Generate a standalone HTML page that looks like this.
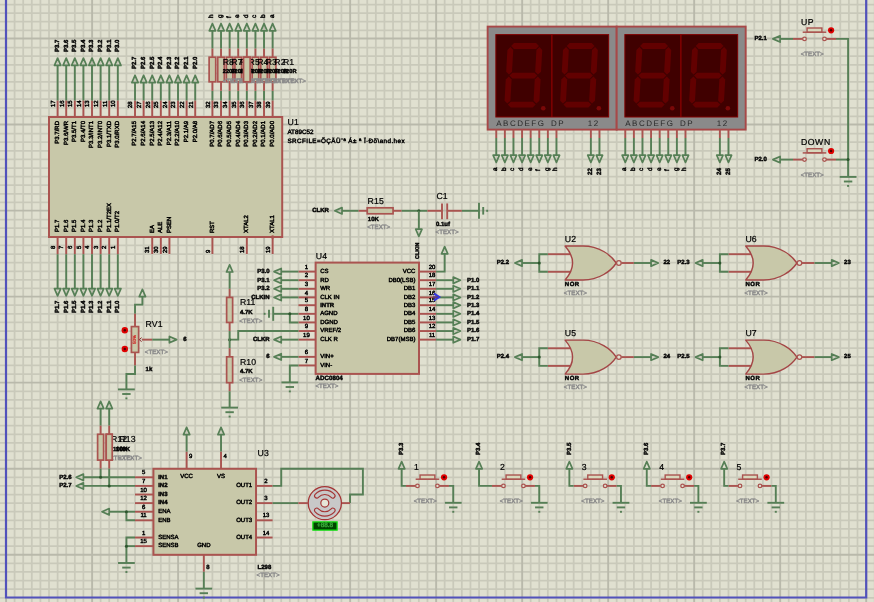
<!DOCTYPE html>
<html lang="en"><head><meta charset="utf-8"><title>Schematic</title>
<style>
html,body{margin:0;padding:0}
body{width:874px;height:602px;overflow:hidden;background:#e0e0d0;position:relative;font-family:"Liberation Sans",sans-serif;}
svg{position:absolute;left:0;top:0;display:block}
#t{position:absolute;left:0;top:0;width:874px;height:602px;will-change:transform;opacity:0.999}
#t span{position:absolute;white-space:nowrap;line-height:1em;transform-origin:0 0;color:#000;text-rendering:geometricPrecision;-webkit-text-stroke:0.45px currentColor;-webkit-font-smoothing:antialiased}
</style></head><body>
<svg width="874" height="602" viewBox="0 0 874 602">
<path d="M-2.6 0V602M14.6 0V602M23.2 0V602M31.8 0V602M40.4 0V602M49.01 0V602M57.61 0V602M66.21 0V602M74.81 0V602M83.41 0V602M100.61 0V602M109.21 0V602M117.81 0V602M126.41 0V602M135.02 0V602M143.62 0V602M152.22 0V602M160.82 0V602M169.42 0V602M186.62 0V602M195.22 0V602M203.82 0V602M212.42 0V602M221.03 0V602M229.63 0V602M238.23 0V602M246.83 0V602M255.43 0V602M272.63 0V602M281.23 0V602M289.83 0V602M298.43 0V602M307.04 0V602M315.64 0V602M324.24 0V602M332.84 0V602M341.44 0V602M358.64 0V602M367.24 0V602M375.84 0V602M384.44 0V602M393.05 0V602M401.65 0V602M410.25 0V602M418.85 0V602M427.45 0V602M444.65 0V602M453.25 0V602M461.85 0V602M470.45 0V602M479.06 0V602M487.66 0V602M496.26 0V602M504.86 0V602M513.46 0V602M530.66 0V602M539.26 0V602M547.86 0V602M556.46 0V602M565.07 0V602M573.67 0V602M582.27 0V602M590.87 0V602M599.47 0V602M616.67 0V602M625.27 0V602M633.87 0V602M642.47 0V602M651.08 0V602M659.68 0V602M668.28 0V602M676.88 0V602M685.48 0V602M702.68 0V602M711.28 0V602M719.88 0V602M728.48 0V602M737.09 0V602M745.69 0V602M754.29 0V602M762.89 0V602M771.49 0V602M788.69 0V602M797.29 0V602M805.89 0V602M814.49 0V602M823.1 0V602M831.7 0V602M840.3 0V602M848.9 0V602M857.5 0V602M874.7 0V602M0 -4.07H874M0 4.53H874M0 13.14H874M0 21.74H874M0 30.35H874M0 47.55H874M0 56.16H874M0 64.76H874M0 73.37H874M0 81.97H874M0 90.57H874M0 99.18H874M0 107.78H874M0 116.39H874M0 133.59H874M0 142.2H874M0 150.8H874M0 159.41H874M0 168.01H874M0 176.61H874M0 185.22H874M0 193.82H874M0 202.43H874M0 219.63H874M0 228.24H874M0 236.84H874M0 245.45H874M0 254.05H874M0 262.65H874M0 271.26H874M0 279.86H874M0 288.47H874M0 305.22H874M0 313.83H874M0 322.43H874M0 331.04H874M0 339.64H874M0 348.24H874M0 356.85H874M0 365.45H874M0 374.06H874M0 391.26H874M0 399.87H874M0 408.47H874M0 417.08H874M0 425.68H874M0 434.28H874M0 442.89H874M0 451.49H874M0 460.1H874M0 477.3H874M0 485.91H874M0 494.51H874M0 503.12H874M0 511.72H874M0 520.32H874M0 528.93H874M0 537.53H874M0 546.14H874M0 563.34H874M0 571.95H874M0 580.55H874M0 589.16H874M0 597.76H874M0 606.36H874" stroke="#c9c9ba" stroke-width="1.75" fill="none"/>
<path d="M6.1 0V602M92.11 0V602M178.12 0V602M264.13 0V602M350.14 0V602M436.15 0V602M522.16 0V602M608.17 0V602M694.18 0V602M780.19 0V602M866.2 0V602M0 38.5H874M0 124.54H874M0 210.58H874M0 296.62H874M0 382.66H874M0 468.7H874M0 554.74H874" stroke="#b9b9ab" stroke-width="1.9" fill="none"/>
<path d="M6 0V597.5H866.2V0" stroke="#5252bb" stroke-width="2.2" fill="none"/>
<rect x="49" y="117" width="233.2" height="120" fill="#c8c8a9" stroke="#aa5450" stroke-width="2.0"/>
<line x1="57.61" y1="100.4" x2="57.61" y2="117" stroke="#aa5450" stroke-width="1.9" stroke-linecap="butt"/>
<path d="M57.61 100.4 L57.61 65.4" stroke="#567f56" stroke-width="1.9" fill="none" stroke-linejoin="miter"/>
<path d="M60.76 65.4 L57.61 58.2 L54.46 65.4 Z" stroke="#567f56" stroke-width="1.7" fill="none" stroke-linejoin="round"/>
<line x1="66.21" y1="100.4" x2="66.21" y2="117" stroke="#aa5450" stroke-width="1.9" stroke-linecap="butt"/>
<path d="M66.21 100.4 L66.21 65.4" stroke="#567f56" stroke-width="1.9" fill="none" stroke-linejoin="miter"/>
<path d="M69.36 65.4 L66.21 58.2 L63.06 65.4 Z" stroke="#567f56" stroke-width="1.7" fill="none" stroke-linejoin="round"/>
<line x1="74.81" y1="100.4" x2="74.81" y2="117" stroke="#aa5450" stroke-width="1.9" stroke-linecap="butt"/>
<path d="M74.81 100.4 L74.81 65.4" stroke="#567f56" stroke-width="1.9" fill="none" stroke-linejoin="miter"/>
<path d="M77.96 65.4 L74.81 58.2 L71.66 65.4 Z" stroke="#567f56" stroke-width="1.7" fill="none" stroke-linejoin="round"/>
<line x1="83.41" y1="100.4" x2="83.41" y2="117" stroke="#aa5450" stroke-width="1.9" stroke-linecap="butt"/>
<path d="M83.41 100.4 L83.41 65.4" stroke="#567f56" stroke-width="1.9" fill="none" stroke-linejoin="miter"/>
<path d="M86.56 65.4 L83.41 58.2 L80.26 65.4 Z" stroke="#567f56" stroke-width="1.7" fill="none" stroke-linejoin="round"/>
<line x1="92.01" y1="100.4" x2="92.01" y2="117" stroke="#aa5450" stroke-width="1.9" stroke-linecap="butt"/>
<path d="M92.01 100.4 L92.01 65.4" stroke="#567f56" stroke-width="1.9" fill="none" stroke-linejoin="miter"/>
<path d="M95.16 65.4 L92.01 58.2 L88.86 65.4 Z" stroke="#567f56" stroke-width="1.7" fill="none" stroke-linejoin="round"/>
<line x1="100.61" y1="100.4" x2="100.61" y2="117" stroke="#aa5450" stroke-width="1.9" stroke-linecap="butt"/>
<path d="M100.61 100.4 L100.61 65.4" stroke="#567f56" stroke-width="1.9" fill="none" stroke-linejoin="miter"/>
<path d="M103.76 65.4 L100.61 58.2 L97.46 65.4 Z" stroke="#567f56" stroke-width="1.7" fill="none" stroke-linejoin="round"/>
<line x1="109.21" y1="100.4" x2="109.21" y2="117" stroke="#aa5450" stroke-width="1.9" stroke-linecap="butt"/>
<path d="M109.21 100.4 L109.21 65.4" stroke="#567f56" stroke-width="1.9" fill="none" stroke-linejoin="miter"/>
<path d="M112.36 65.4 L109.21 58.2 L106.06 65.4 Z" stroke="#567f56" stroke-width="1.7" fill="none" stroke-linejoin="round"/>
<line x1="117.81" y1="100.4" x2="117.81" y2="117" stroke="#aa5450" stroke-width="1.9" stroke-linecap="butt"/>
<path d="M117.81 100.4 L117.81 65.4" stroke="#567f56" stroke-width="1.9" fill="none" stroke-linejoin="miter"/>
<path d="M120.96 65.4 L117.81 58.2 L114.66 65.4 Z" stroke="#567f56" stroke-width="1.7" fill="none" stroke-linejoin="round"/>
<line x1="135.02" y1="100.4" x2="135.02" y2="117" stroke="#aa5450" stroke-width="1.9" stroke-linecap="butt"/>
<path d="M135.02 100.4 L135.02 82.6" stroke="#567f56" stroke-width="1.9" fill="none" stroke-linejoin="miter"/>
<path d="M138.17 82.6 L135.02 75.4 L131.87 82.6 Z" stroke="#567f56" stroke-width="1.7" fill="none" stroke-linejoin="round"/>
<line x1="143.62" y1="100.4" x2="143.62" y2="117" stroke="#aa5450" stroke-width="1.9" stroke-linecap="butt"/>
<path d="M143.62 100.4 L143.62 82.6" stroke="#567f56" stroke-width="1.9" fill="none" stroke-linejoin="miter"/>
<path d="M146.77 82.6 L143.62 75.4 L140.47 82.6 Z" stroke="#567f56" stroke-width="1.7" fill="none" stroke-linejoin="round"/>
<line x1="152.22" y1="100.4" x2="152.22" y2="117" stroke="#aa5450" stroke-width="1.9" stroke-linecap="butt"/>
<path d="M152.22 100.4 L152.22 82.6" stroke="#567f56" stroke-width="1.9" fill="none" stroke-linejoin="miter"/>
<path d="M155.37 82.6 L152.22 75.4 L149.07 82.6 Z" stroke="#567f56" stroke-width="1.7" fill="none" stroke-linejoin="round"/>
<line x1="160.82" y1="100.4" x2="160.82" y2="117" stroke="#aa5450" stroke-width="1.9" stroke-linecap="butt"/>
<path d="M160.82 100.4 L160.82 82.6" stroke="#567f56" stroke-width="1.9" fill="none" stroke-linejoin="miter"/>
<path d="M163.97 82.6 L160.82 75.4 L157.67 82.6 Z" stroke="#567f56" stroke-width="1.7" fill="none" stroke-linejoin="round"/>
<line x1="169.42" y1="100.4" x2="169.42" y2="117" stroke="#aa5450" stroke-width="1.9" stroke-linecap="butt"/>
<path d="M169.42 100.4 L169.42 82.6" stroke="#567f56" stroke-width="1.9" fill="none" stroke-linejoin="miter"/>
<path d="M172.57 82.6 L169.42 75.4 L166.27 82.6 Z" stroke="#567f56" stroke-width="1.7" fill="none" stroke-linejoin="round"/>
<line x1="178.02" y1="100.4" x2="178.02" y2="117" stroke="#aa5450" stroke-width="1.9" stroke-linecap="butt"/>
<path d="M178.02 100.4 L178.02 82.6" stroke="#567f56" stroke-width="1.9" fill="none" stroke-linejoin="miter"/>
<path d="M181.17 82.6 L178.02 75.4 L174.87 82.6 Z" stroke="#567f56" stroke-width="1.7" fill="none" stroke-linejoin="round"/>
<line x1="186.62" y1="100.4" x2="186.62" y2="117" stroke="#aa5450" stroke-width="1.9" stroke-linecap="butt"/>
<path d="M186.62 100.4 L186.62 82.6" stroke="#567f56" stroke-width="1.9" fill="none" stroke-linejoin="miter"/>
<path d="M189.77 82.6 L186.62 75.4 L183.47 82.6 Z" stroke="#567f56" stroke-width="1.7" fill="none" stroke-linejoin="round"/>
<line x1="195.22" y1="100.4" x2="195.22" y2="117" stroke="#aa5450" stroke-width="1.9" stroke-linecap="butt"/>
<path d="M195.22 100.4 L195.22 82.6" stroke="#567f56" stroke-width="1.9" fill="none" stroke-linejoin="miter"/>
<path d="M198.37 82.6 L195.22 75.4 L192.07 82.6 Z" stroke="#567f56" stroke-width="1.7" fill="none" stroke-linejoin="round"/>
<line x1="212.42" y1="100.4" x2="212.42" y2="117" stroke="#aa5450" stroke-width="1.9" stroke-linecap="butt"/>
<path d="M212.42 100.4 L212.42 90.8" stroke="#567f56" stroke-width="1.9" fill="none" stroke-linejoin="miter"/>
<line x1="212.42" y1="90.8" x2="212.42" y2="81.8" stroke="#aa5450" stroke-width="1.9" stroke-linecap="butt"/>
<line x1="212.42" y1="57.2" x2="212.42" y2="48.4" stroke="#aa5450" stroke-width="1.9" stroke-linecap="butt"/>
<path d="M212.42 48.4 L212.42 30.8" stroke="#567f56" stroke-width="1.9" fill="none" stroke-linejoin="miter"/>
<path d="M215.57 30.8 L212.42 23.6 L209.27 30.8 Z" stroke="#567f56" stroke-width="1.7" fill="none" stroke-linejoin="round"/>
<line x1="221.03" y1="100.4" x2="221.03" y2="117" stroke="#aa5450" stroke-width="1.9" stroke-linecap="butt"/>
<path d="M221.03 100.4 L221.03 90.8" stroke="#567f56" stroke-width="1.9" fill="none" stroke-linejoin="miter"/>
<line x1="221.03" y1="90.8" x2="221.03" y2="81.8" stroke="#aa5450" stroke-width="1.9" stroke-linecap="butt"/>
<line x1="221.03" y1="57.2" x2="221.03" y2="48.4" stroke="#aa5450" stroke-width="1.9" stroke-linecap="butt"/>
<path d="M221.03 48.4 L221.03 30.8" stroke="#567f56" stroke-width="1.9" fill="none" stroke-linejoin="miter"/>
<path d="M224.18 30.8 L221.03 23.6 L217.88 30.8 Z" stroke="#567f56" stroke-width="1.7" fill="none" stroke-linejoin="round"/>
<line x1="229.63" y1="100.4" x2="229.63" y2="117" stroke="#aa5450" stroke-width="1.9" stroke-linecap="butt"/>
<path d="M229.63 100.4 L229.63 90.8" stroke="#567f56" stroke-width="1.9" fill="none" stroke-linejoin="miter"/>
<line x1="229.63" y1="90.8" x2="229.63" y2="81.8" stroke="#aa5450" stroke-width="1.9" stroke-linecap="butt"/>
<line x1="229.63" y1="57.2" x2="229.63" y2="48.4" stroke="#aa5450" stroke-width="1.9" stroke-linecap="butt"/>
<path d="M229.63 48.4 L229.63 30.8" stroke="#567f56" stroke-width="1.9" fill="none" stroke-linejoin="miter"/>
<path d="M232.78 30.8 L229.63 23.6 L226.48 30.8 Z" stroke="#567f56" stroke-width="1.7" fill="none" stroke-linejoin="round"/>
<line x1="238.23" y1="100.4" x2="238.23" y2="117" stroke="#aa5450" stroke-width="1.9" stroke-linecap="butt"/>
<path d="M238.23 100.4 L238.23 90.8" stroke="#567f56" stroke-width="1.9" fill="none" stroke-linejoin="miter"/>
<line x1="238.23" y1="90.8" x2="238.23" y2="81.8" stroke="#aa5450" stroke-width="1.9" stroke-linecap="butt"/>
<line x1="238.23" y1="57.2" x2="238.23" y2="48.4" stroke="#aa5450" stroke-width="1.9" stroke-linecap="butt"/>
<path d="M238.23 48.4 L238.23 30.8" stroke="#567f56" stroke-width="1.9" fill="none" stroke-linejoin="miter"/>
<path d="M241.38 30.8 L238.23 23.6 L235.08 30.8 Z" stroke="#567f56" stroke-width="1.7" fill="none" stroke-linejoin="round"/>
<line x1="246.83" y1="100.4" x2="246.83" y2="117" stroke="#aa5450" stroke-width="1.9" stroke-linecap="butt"/>
<path d="M246.83 100.4 L246.83 90.8" stroke="#567f56" stroke-width="1.9" fill="none" stroke-linejoin="miter"/>
<line x1="246.83" y1="90.8" x2="246.83" y2="81.8" stroke="#aa5450" stroke-width="1.9" stroke-linecap="butt"/>
<line x1="246.83" y1="57.2" x2="246.83" y2="48.4" stroke="#aa5450" stroke-width="1.9" stroke-linecap="butt"/>
<path d="M246.83 48.4 L246.83 30.8" stroke="#567f56" stroke-width="1.9" fill="none" stroke-linejoin="miter"/>
<path d="M249.98 30.8 L246.83 23.6 L243.68 30.8 Z" stroke="#567f56" stroke-width="1.7" fill="none" stroke-linejoin="round"/>
<line x1="255.43" y1="100.4" x2="255.43" y2="117" stroke="#aa5450" stroke-width="1.9" stroke-linecap="butt"/>
<path d="M255.43 100.4 L255.43 90.8" stroke="#567f56" stroke-width="1.9" fill="none" stroke-linejoin="miter"/>
<line x1="255.43" y1="90.8" x2="255.43" y2="81.8" stroke="#aa5450" stroke-width="1.9" stroke-linecap="butt"/>
<line x1="255.43" y1="57.2" x2="255.43" y2="48.4" stroke="#aa5450" stroke-width="1.9" stroke-linecap="butt"/>
<path d="M255.43 48.4 L255.43 30.8" stroke="#567f56" stroke-width="1.9" fill="none" stroke-linejoin="miter"/>
<path d="M258.58 30.8 L255.43 23.6 L252.28 30.8 Z" stroke="#567f56" stroke-width="1.7" fill="none" stroke-linejoin="round"/>
<line x1="264.03" y1="100.4" x2="264.03" y2="117" stroke="#aa5450" stroke-width="1.9" stroke-linecap="butt"/>
<path d="M264.03 100.4 L264.03 90.8" stroke="#567f56" stroke-width="1.9" fill="none" stroke-linejoin="miter"/>
<line x1="264.03" y1="90.8" x2="264.03" y2="81.8" stroke="#aa5450" stroke-width="1.9" stroke-linecap="butt"/>
<line x1="264.03" y1="57.2" x2="264.03" y2="48.4" stroke="#aa5450" stroke-width="1.9" stroke-linecap="butt"/>
<path d="M264.03 48.4 L264.03 30.8" stroke="#567f56" stroke-width="1.9" fill="none" stroke-linejoin="miter"/>
<path d="M267.18 30.8 L264.03 23.6 L260.88 30.8 Z" stroke="#567f56" stroke-width="1.7" fill="none" stroke-linejoin="round"/>
<line x1="272.63" y1="100.4" x2="272.63" y2="117" stroke="#aa5450" stroke-width="1.9" stroke-linecap="butt"/>
<path d="M272.63 100.4 L272.63 90.8" stroke="#567f56" stroke-width="1.9" fill="none" stroke-linejoin="miter"/>
<line x1="272.63" y1="90.8" x2="272.63" y2="81.8" stroke="#aa5450" stroke-width="1.9" stroke-linecap="butt"/>
<line x1="272.63" y1="57.2" x2="272.63" y2="48.4" stroke="#aa5450" stroke-width="1.9" stroke-linecap="butt"/>
<path d="M272.63 48.4 L272.63 30.8" stroke="#567f56" stroke-width="1.9" fill="none" stroke-linejoin="miter"/>
<path d="M275.78 30.8 L272.63 23.6 L269.48 30.8 Z" stroke="#567f56" stroke-width="1.7" fill="none" stroke-linejoin="round"/>
<rect x="209.12" y="57.2" width="6.6" height="24.6" fill="#c8c8a9" stroke="#aa5450" stroke-width="1.7"/>
<rect x="217.73" y="57.2" width="6.6" height="24.6" fill="#c8c8a9" stroke="#aa5450" stroke-width="1.7"/>
<rect x="226.33" y="57.2" width="6.6" height="24.6" fill="#c8c8a9" stroke="#aa5450" stroke-width="1.7"/>
<rect x="234.93" y="57.2" width="6.6" height="24.6" fill="#c8c8a9" stroke="#aa5450" stroke-width="1.7"/>
<rect x="243.53" y="57.2" width="6.6" height="24.6" fill="#c8c8a9" stroke="#aa5450" stroke-width="1.7"/>
<rect x="252.13" y="57.2" width="6.6" height="24.6" fill="#c8c8a9" stroke="#aa5450" stroke-width="1.7"/>
<rect x="260.73" y="57.2" width="6.6" height="24.6" fill="#c8c8a9" stroke="#aa5450" stroke-width="1.7"/>
<rect x="269.33" y="57.2" width="6.6" height="24.6" fill="#c8c8a9" stroke="#aa5450" stroke-width="1.7"/>
<line x1="57.61" y1="237" x2="57.61" y2="254.2" stroke="#aa5450" stroke-width="1.9" stroke-linecap="butt"/>
<path d="M57.61 254.2 L57.61 288.6" stroke="#567f56" stroke-width="1.9" fill="none" stroke-linejoin="miter"/>
<path d="M54.46 288.6 L57.61 295.8 L60.76 288.6 Z" stroke="#567f56" stroke-width="1.7" fill="none" stroke-linejoin="round"/>
<line x1="66.21" y1="237" x2="66.21" y2="254.2" stroke="#aa5450" stroke-width="1.9" stroke-linecap="butt"/>
<path d="M66.21 254.2 L66.21 288.6" stroke="#567f56" stroke-width="1.9" fill="none" stroke-linejoin="miter"/>
<path d="M63.06 288.6 L66.21 295.8 L69.36 288.6 Z" stroke="#567f56" stroke-width="1.7" fill="none" stroke-linejoin="round"/>
<line x1="74.81" y1="237" x2="74.81" y2="254.2" stroke="#aa5450" stroke-width="1.9" stroke-linecap="butt"/>
<path d="M74.81 254.2 L74.81 288.6" stroke="#567f56" stroke-width="1.9" fill="none" stroke-linejoin="miter"/>
<path d="M71.66 288.6 L74.81 295.8 L77.96 288.6 Z" stroke="#567f56" stroke-width="1.7" fill="none" stroke-linejoin="round"/>
<line x1="83.41" y1="237" x2="83.41" y2="254.2" stroke="#aa5450" stroke-width="1.9" stroke-linecap="butt"/>
<path d="M83.41 254.2 L83.41 288.6" stroke="#567f56" stroke-width="1.9" fill="none" stroke-linejoin="miter"/>
<path d="M80.26 288.6 L83.41 295.8 L86.56 288.6 Z" stroke="#567f56" stroke-width="1.7" fill="none" stroke-linejoin="round"/>
<line x1="92.01" y1="237" x2="92.01" y2="254.2" stroke="#aa5450" stroke-width="1.9" stroke-linecap="butt"/>
<path d="M92.01 254.2 L92.01 288.6" stroke="#567f56" stroke-width="1.9" fill="none" stroke-linejoin="miter"/>
<path d="M88.86 288.6 L92.01 295.8 L95.16 288.6 Z" stroke="#567f56" stroke-width="1.7" fill="none" stroke-linejoin="round"/>
<line x1="100.61" y1="237" x2="100.61" y2="254.2" stroke="#aa5450" stroke-width="1.9" stroke-linecap="butt"/>
<path d="M100.61 254.2 L100.61 288.6" stroke="#567f56" stroke-width="1.9" fill="none" stroke-linejoin="miter"/>
<path d="M97.46 288.6 L100.61 295.8 L103.76 288.6 Z" stroke="#567f56" stroke-width="1.7" fill="none" stroke-linejoin="round"/>
<line x1="109.21" y1="237" x2="109.21" y2="254.2" stroke="#aa5450" stroke-width="1.9" stroke-linecap="butt"/>
<path d="M109.21 254.2 L109.21 288.6" stroke="#567f56" stroke-width="1.9" fill="none" stroke-linejoin="miter"/>
<path d="M106.06 288.6 L109.21 295.8 L112.36 288.6 Z" stroke="#567f56" stroke-width="1.7" fill="none" stroke-linejoin="round"/>
<line x1="117.81" y1="237" x2="117.81" y2="254.2" stroke="#aa5450" stroke-width="1.9" stroke-linecap="butt"/>
<path d="M117.81 254.2 L117.81 288.6" stroke="#567f56" stroke-width="1.9" fill="none" stroke-linejoin="miter"/>
<path d="M114.66 288.6 L117.81 295.8 L120.96 288.6 Z" stroke="#567f56" stroke-width="1.7" fill="none" stroke-linejoin="round"/>
<line x1="152.22" y1="237" x2="152.22" y2="254" stroke="#aa5450" stroke-width="1.9" stroke-linecap="butt"/>
<line x1="160.82" y1="237" x2="160.82" y2="254" stroke="#aa5450" stroke-width="1.9" stroke-linecap="butt"/>
<line x1="169.42" y1="237" x2="169.42" y2="254" stroke="#aa5450" stroke-width="1.9" stroke-linecap="butt"/>
<line x1="212.42" y1="237" x2="212.42" y2="254" stroke="#aa5450" stroke-width="1.9" stroke-linecap="butt"/>
<line x1="246.83" y1="237" x2="246.83" y2="254" stroke="#aa5450" stroke-width="1.9" stroke-linecap="butt"/>
<line x1="272.63" y1="237" x2="272.63" y2="254" stroke="#aa5450" stroke-width="1.9" stroke-linecap="butt"/>
<circle cx="272.63" cy="237.0" r="1.8" fill="#aa5450"/>
<rect x="315.64" y="262.6" width="103.36" height="111.3" fill="#c8c8a9" stroke="#aa5450" stroke-width="2.0"/>
<line x1="298.43" y1="271.61" x2="315.64" y2="271.61" stroke="#aa5450" stroke-width="1.9" stroke-linecap="butt"/>
<line x1="298.43" y1="280.21" x2="315.64" y2="280.21" stroke="#aa5450" stroke-width="1.9" stroke-linecap="butt"/>
<line x1="298.43" y1="288.82" x2="315.64" y2="288.82" stroke="#aa5450" stroke-width="1.9" stroke-linecap="butt"/>
<line x1="298.43" y1="297.42" x2="315.64" y2="297.42" stroke="#aa5450" stroke-width="1.9" stroke-linecap="butt"/>
<line x1="298.43" y1="305.22" x2="315.64" y2="305.22" stroke="#aa5450" stroke-width="1.9" stroke-linecap="butt"/>
<line x1="298.43" y1="313.83" x2="315.64" y2="313.83" stroke="#aa5450" stroke-width="1.9" stroke-linecap="butt"/>
<line x1="298.43" y1="322.43" x2="315.64" y2="322.43" stroke="#aa5450" stroke-width="1.9" stroke-linecap="butt"/>
<line x1="298.43" y1="331.04" x2="315.64" y2="331.04" stroke="#aa5450" stroke-width="1.9" stroke-linecap="butt"/>
<line x1="298.43" y1="339.64" x2="315.64" y2="339.64" stroke="#aa5450" stroke-width="1.9" stroke-linecap="butt"/>
<line x1="298.43" y1="356.85" x2="315.64" y2="356.85" stroke="#aa5450" stroke-width="1.9" stroke-linecap="butt"/>
<line x1="298.43" y1="365.45" x2="315.64" y2="365.45" stroke="#aa5450" stroke-width="1.9" stroke-linecap="butt"/>
<path d="M298.43 271.61 L281.23 271.61" stroke="#567f56" stroke-width="1.9" fill="none" stroke-linejoin="miter"/>
<path d="M281.23 268.46 L274.03 271.61 L281.23 274.76 Z" stroke="#567f56" stroke-width="1.7" fill="none" stroke-linejoin="round"/>
<path d="M298.43 280.21 L281.23 280.21" stroke="#567f56" stroke-width="1.9" fill="none" stroke-linejoin="miter"/>
<path d="M281.23 277.06 L274.03 280.21 L281.23 283.36 Z" stroke="#567f56" stroke-width="1.7" fill="none" stroke-linejoin="round"/>
<path d="M298.43 288.82 L281.23 288.82" stroke="#567f56" stroke-width="1.9" fill="none" stroke-linejoin="miter"/>
<path d="M281.23 285.67 L274.03 288.82 L281.23 291.97 Z" stroke="#567f56" stroke-width="1.7" fill="none" stroke-linejoin="round"/>
<path d="M298.43 297.42 L281.23 297.42" stroke="#567f56" stroke-width="1.9" fill="none" stroke-linejoin="miter"/>
<path d="M281.23 294.27 L274.03 297.42 L281.23 300.57 Z" stroke="#567f56" stroke-width="1.7" fill="none" stroke-linejoin="round"/>
<path d="M298.43 339.64 L281.23 339.64" stroke="#567f56" stroke-width="1.9" fill="none" stroke-linejoin="miter"/>
<path d="M281.23 336.49 L274.03 339.64 L281.23 342.79 Z" stroke="#567f56" stroke-width="1.7" fill="none" stroke-linejoin="round"/>
<path d="M298.43 356.85 L281.23 356.85" stroke="#567f56" stroke-width="1.9" fill="none" stroke-linejoin="miter"/>
<path d="M281.23 353.7 L274.03 356.85 L281.23 360 Z" stroke="#567f56" stroke-width="1.7" fill="none" stroke-linejoin="round"/>
<path d="M298.43 313.83 L273.2 313.83" stroke="#567f56" stroke-width="1.9" fill="none" stroke-linejoin="miter"/>
<line x1="273.2" y1="306.83" x2="273.2" y2="320.83" stroke="#567f56" stroke-width="1.9" stroke-linecap="butt"/>
<line x1="269" y1="309.83" x2="269" y2="317.83" stroke="#567f56" stroke-width="1.9" stroke-linecap="butt"/>
<line x1="264.6" y1="312.83" x2="264.6" y2="314.83" stroke="#567f56" stroke-width="1.9" stroke-linecap="butt"/>
<path d="M298.43 322.43 L289.83 322.43 L289.83 313.83" stroke="#567f56" stroke-width="1.9" fill="none" stroke-linejoin="miter"/>
<circle cx="289.83" cy="313.83" r="1.5" fill="#2d552d"/>
<path d="M298.43 331.04 L238.23 331.04 L238.23 339.64 L229.63 339.64" stroke="#567f56" stroke-width="1.9" fill="none" stroke-linejoin="miter"/>
<circle cx="229.63" cy="339.64" r="1.5" fill="#2d552d"/>
<path d="M298.43 365.45 L289.83 365.45 L289.83 382.4" stroke="#567f56" stroke-width="1.9" fill="none" stroke-linejoin="miter"/>
<line x1="281.43" y1="382.4" x2="298.23" y2="382.4" stroke="#567f56" stroke-width="1.9" stroke-linecap="butt"/>
<line x1="285.63" y1="387" x2="294.03" y2="387" stroke="#567f56" stroke-width="1.9" stroke-linecap="butt"/>
<line x1="288.83" y1="391.4" x2="290.83" y2="391.4" stroke="#567f56" stroke-width="1.9" stroke-linecap="butt"/>
<line x1="419" y1="271.61" x2="436.05" y2="271.61" stroke="#aa5450" stroke-width="1.9" stroke-linecap="butt"/>
<line x1="419" y1="280.21" x2="436.05" y2="280.21" stroke="#aa5450" stroke-width="1.9" stroke-linecap="butt"/>
<path d="M436.05 280.21 L453.25 280.21" stroke="#567f56" stroke-width="1.9" fill="none" stroke-linejoin="miter"/>
<path d="M453.25 283.36 L460.45 280.21 L453.25 277.06 Z" stroke="#567f56" stroke-width="1.7" fill="none" stroke-linejoin="round"/>
<line x1="419" y1="288.82" x2="436.05" y2="288.82" stroke="#aa5450" stroke-width="1.9" stroke-linecap="butt"/>
<path d="M436.05 288.82 L453.25 288.82" stroke="#567f56" stroke-width="1.9" fill="none" stroke-linejoin="miter"/>
<path d="M453.25 291.97 L460.45 288.82 L453.25 285.67 Z" stroke="#567f56" stroke-width="1.7" fill="none" stroke-linejoin="round"/>
<line x1="419" y1="297.42" x2="436.05" y2="297.42" stroke="#aa5450" stroke-width="1.9" stroke-linecap="butt"/>
<path d="M436.05 297.42 L453.25 297.42" stroke="#567f56" stroke-width="1.9" fill="none" stroke-linejoin="miter"/>
<path d="M453.25 300.57 L460.45 297.42 L453.25 294.27 Z" stroke="#567f56" stroke-width="1.7" fill="none" stroke-linejoin="round"/>
<line x1="419" y1="305.22" x2="436.05" y2="305.22" stroke="#aa5450" stroke-width="1.9" stroke-linecap="butt"/>
<path d="M436.05 305.22 L453.25 305.22" stroke="#567f56" stroke-width="1.9" fill="none" stroke-linejoin="miter"/>
<path d="M453.25 308.37 L460.45 305.22 L453.25 302.07 Z" stroke="#567f56" stroke-width="1.7" fill="none" stroke-linejoin="round"/>
<line x1="419" y1="313.83" x2="436.05" y2="313.83" stroke="#aa5450" stroke-width="1.9" stroke-linecap="butt"/>
<path d="M436.05 313.83 L453.25 313.83" stroke="#567f56" stroke-width="1.9" fill="none" stroke-linejoin="miter"/>
<path d="M453.25 316.98 L460.45 313.83 L453.25 310.68 Z" stroke="#567f56" stroke-width="1.7" fill="none" stroke-linejoin="round"/>
<line x1="419" y1="322.43" x2="436.05" y2="322.43" stroke="#aa5450" stroke-width="1.9" stroke-linecap="butt"/>
<path d="M436.05 322.43 L453.25 322.43" stroke="#567f56" stroke-width="1.9" fill="none" stroke-linejoin="miter"/>
<path d="M453.25 325.58 L460.45 322.43 L453.25 319.28 Z" stroke="#567f56" stroke-width="1.7" fill="none" stroke-linejoin="round"/>
<line x1="419" y1="331.04" x2="436.05" y2="331.04" stroke="#aa5450" stroke-width="1.9" stroke-linecap="butt"/>
<path d="M436.05 331.04 L453.25 331.04" stroke="#567f56" stroke-width="1.9" fill="none" stroke-linejoin="miter"/>
<path d="M453.25 334.19 L460.45 331.04 L453.25 327.89 Z" stroke="#567f56" stroke-width="1.7" fill="none" stroke-linejoin="round"/>
<line x1="419" y1="339.64" x2="436.05" y2="339.64" stroke="#aa5450" stroke-width="1.9" stroke-linecap="butt"/>
<path d="M436.05 339.64 L453.25 339.64" stroke="#567f56" stroke-width="1.9" fill="none" stroke-linejoin="miter"/>
<path d="M453.25 342.79 L460.45 339.64 L453.25 336.49 Z" stroke="#567f56" stroke-width="1.7" fill="none" stroke-linejoin="round"/>
<path d="M436.05 271.61 L444.65 271.61 L444.65 253.8" stroke="#567f56" stroke-width="1.9" fill="none" stroke-linejoin="miter"/>
<path d="M447.8 253.8 L444.65 246.6 L441.5 253.8 Z" stroke="#567f56" stroke-width="1.7" fill="none" stroke-linejoin="round"/>
<path d="M232.78 272 L229.63 264.8 L226.48 272 Z" stroke="#567f56" stroke-width="1.7" fill="none" stroke-linejoin="round"/>
<path d="M229.63 272 L229.63 288.82" stroke="#567f56" stroke-width="1.9" fill="none" stroke-linejoin="miter"/>
<line x1="229.63" y1="288.82" x2="229.63" y2="297.42" stroke="#aa5450" stroke-width="1.9" stroke-linecap="butt"/>
<line x1="229.63" y1="322.44" x2="229.63" y2="331.04" stroke="#aa5450" stroke-width="1.9" stroke-linecap="butt"/>
<rect x="226.63" y="297.42" width="6" height="25.02" fill="#c8c8a9" stroke="#aa5450" stroke-width="1.7"/>
<path d="M229.63 331.04 L229.63 348.24" stroke="#567f56" stroke-width="1.9" fill="none" stroke-linejoin="miter"/>
<line x1="229.63" y1="348.24" x2="229.63" y2="356.84" stroke="#aa5450" stroke-width="1.9" stroke-linecap="butt"/>
<line x1="229.63" y1="382.66" x2="229.63" y2="391.26" stroke="#aa5450" stroke-width="1.9" stroke-linecap="butt"/>
<rect x="226.63" y="356.84" width="6" height="25.82" fill="#c8c8a9" stroke="#aa5450" stroke-width="1.7"/>
<path d="M229.63 391.26 L229.63 407.6" stroke="#567f56" stroke-width="1.9" fill="none" stroke-linejoin="miter"/>
<line x1="221.23" y1="407.6" x2="238.03" y2="407.6" stroke="#567f56" stroke-width="1.9" stroke-linecap="butt"/>
<line x1="225.43" y1="412.2" x2="233.83" y2="412.2" stroke="#567f56" stroke-width="1.9" stroke-linecap="butt"/>
<line x1="228.63" y1="416.6" x2="230.63" y2="416.6" stroke="#567f56" stroke-width="1.9" stroke-linecap="butt"/>
<path d="M342.04 207.65 L334.84 210.8 L342.04 213.95 Z" stroke="#567f56" stroke-width="1.7" fill="none" stroke-linejoin="round"/>
<path d="M342.04 210.8 L358.64 210.8" stroke="#567f56" stroke-width="1.9" fill="none" stroke-linejoin="miter"/>
<line x1="358.64" y1="210.8" x2="367.24" y2="210.8" stroke="#aa5450" stroke-width="1.9" stroke-linecap="butt"/>
<rect x="367.24" y="207.8" width="25.81" height="6" fill="#c8c8a9" stroke="#aa5450" stroke-width="1.7"/>
<line x1="393.05" y1="210.8" x2="401.65" y2="210.8" stroke="#aa5450" stroke-width="1.9" stroke-linecap="butt"/>
<path d="M401.65 210.8 L427.45 210.8" stroke="#567f56" stroke-width="1.9" fill="none" stroke-linejoin="miter"/>
<circle cx="418.85" cy="210.8" r="1.5" fill="#2d552d"/>
<path d="M418.85 210.8 L418.85 229.2" stroke="#567f56" stroke-width="1.9" fill="none" stroke-linejoin="miter"/>
<path d="M415.7 229.2 L418.85 236.4 L422 229.2 Z" stroke="#567f56" stroke-width="1.7" fill="none" stroke-linejoin="round"/>
<line x1="427.45" y1="210.8" x2="442" y2="210.8" stroke="#aa5450" stroke-width="1.9" stroke-linecap="butt"/>
<line x1="447.2" y1="210.8" x2="461.85" y2="210.8" stroke="#aa5450" stroke-width="1.9" stroke-linecap="butt"/>
<line x1="442" y1="203.4" x2="442" y2="219.2" stroke="#aa5450" stroke-width="1.9" stroke-linecap="butt"/>
<line x1="447.2" y1="203.4" x2="447.2" y2="219.2" stroke="#aa5450" stroke-width="1.9" stroke-linecap="butt"/>
<path d="M461.85 210.8 L479 210.8" stroke="#567f56" stroke-width="1.9" fill="none" stroke-linejoin="miter"/>
<line x1="479" y1="202.8" x2="479" y2="218.8" stroke="#567f56" stroke-width="1.9" stroke-linecap="butt"/>
<line x1="483.2" y1="207" x2="483.2" y2="214.6" stroke="#567f56" stroke-width="1.9" stroke-linecap="butt"/>
<line x1="487.2" y1="209.8" x2="487.2" y2="211.8" stroke="#567f56" stroke-width="1.9" stroke-linecap="butt"/>
<path d="M145.55 296.6 L142.4 289.4 L139.25 296.6 Z" stroke="#567f56" stroke-width="1.7" fill="none" stroke-linejoin="round"/>
<path d="M142.4 296.6 L142.4 304.6 L135.02 304.6 L135.02 313.83" stroke="#567f56" stroke-width="1.9" fill="none" stroke-linejoin="miter"/>
<line x1="135.02" y1="313.83" x2="135.02" y2="326.6" stroke="#aa5450" stroke-width="1.9" stroke-linecap="butt"/>
<line x1="135.02" y1="352.4" x2="135.02" y2="365.45" stroke="#aa5450" stroke-width="1.9" stroke-linecap="butt"/>
<rect x="131.42" y="326.6" width="7.2" height="25.8" fill="#c8c8a9" stroke="#aa5450" stroke-width="1.7"/>
<path d="M135.02 365.45 L135.02 374.06 L126.41 374.06 L126.41 389.4" stroke="#567f56" stroke-width="1.9" fill="none" stroke-linejoin="miter"/>
<line x1="118.01" y1="389.4" x2="134.81" y2="389.4" stroke="#567f56" stroke-width="1.9" stroke-linecap="butt"/>
<line x1="122.21" y1="394" x2="130.61" y2="394" stroke="#567f56" stroke-width="1.9" stroke-linecap="butt"/>
<line x1="125.41" y1="398.4" x2="127.41" y2="398.4" stroke="#567f56" stroke-width="1.9" stroke-linecap="butt"/>
<path d="M141.62 337.64 L139.22 339.64 L141.62 341.64" stroke="#8a3030" stroke-width="1.0" fill="none" stroke-linejoin="miter"/>
<line x1="142.02" y1="339.64" x2="152.22" y2="339.64" stroke="#aa5450" stroke-width="1.9" stroke-linecap="butt"/>
<path d="M152.22 339.64 L169.42 339.64" stroke="#567f56" stroke-width="1.9" fill="none" stroke-linejoin="miter"/>
<path d="M169.42 342.79 L176.62 339.64 L169.42 336.49 Z" stroke="#567f56" stroke-width="1.7" fill="none" stroke-linejoin="round"/>
<circle cx="124.8" cy="330.2" r="3.2" fill="#e00000"/><circle cx="124.8" cy="330.2" r="1.2" fill="#500000"/>
<circle cx="124.8" cy="349.0" r="3.2" fill="#e00000"/><circle cx="124.8" cy="349.0" r="1.2" fill="#500000"/>
<rect x="153.42" y="468.8" width="102.61" height="86" fill="#c8c8a9" stroke="#aa5450" stroke-width="2.0"/>
<line x1="135.02" y1="477.3" x2="153.42" y2="477.3" stroke="#aa5450" stroke-width="1.9" stroke-linecap="butt"/>
<line x1="135.02" y1="485.91" x2="153.42" y2="485.91" stroke="#aa5450" stroke-width="1.9" stroke-linecap="butt"/>
<line x1="135.02" y1="494.51" x2="153.42" y2="494.51" stroke="#aa5450" stroke-width="1.9" stroke-linecap="butt"/>
<line x1="135.02" y1="503.12" x2="153.42" y2="503.12" stroke="#aa5450" stroke-width="1.9" stroke-linecap="butt"/>
<line x1="135.02" y1="511.72" x2="153.42" y2="511.72" stroke="#aa5450" stroke-width="1.9" stroke-linecap="butt"/>
<line x1="135.02" y1="520.32" x2="153.42" y2="520.32" stroke="#aa5450" stroke-width="1.9" stroke-linecap="butt"/>
<line x1="135.02" y1="537.53" x2="153.42" y2="537.53" stroke="#aa5450" stroke-width="1.9" stroke-linecap="butt"/>
<line x1="135.02" y1="546.14" x2="153.42" y2="546.14" stroke="#aa5450" stroke-width="1.9" stroke-linecap="butt"/>
<path d="M135.02 477.3 L83.41 477.3" stroke="#567f56" stroke-width="1.9" fill="none" stroke-linejoin="miter"/>
<path d="M83.41 474.15 L76.21 477.3 L83.41 480.45 Z" stroke="#567f56" stroke-width="1.7" fill="none" stroke-linejoin="round"/>
<path d="M135.02 485.91 L83.41 485.91" stroke="#567f56" stroke-width="1.9" fill="none" stroke-linejoin="miter"/>
<path d="M83.41 482.76 L76.21 485.91 L83.41 489.06 Z" stroke="#567f56" stroke-width="1.7" fill="none" stroke-linejoin="round"/>
<path d="M135.02 511.72 L109.21 511.72" stroke="#567f56" stroke-width="1.9" fill="none" stroke-linejoin="miter"/>
<path d="M109.21 508.57 L102.01 511.72 L109.21 514.87 Z" stroke="#567f56" stroke-width="1.7" fill="none" stroke-linejoin="round"/>
<path d="M135.02 520.32 L126.41 520.32 L126.41 511.72" stroke="#567f56" stroke-width="1.9" fill="none" stroke-linejoin="miter"/>
<circle cx="126.41" cy="511.72" r="1.5" fill="#2d552d"/>
<path d="M135.02 537.53 L126.41 537.53 L126.41 563" stroke="#567f56" stroke-width="1.9" fill="none" stroke-linejoin="miter"/>
<path d="M135.02 546.14 L126.41 546.14" stroke="#567f56" stroke-width="1.9" fill="none" stroke-linejoin="miter"/>
<circle cx="126.41" cy="546.14" r="1.5" fill="#2d552d"/>
<line x1="118.01" y1="563" x2="134.81" y2="563" stroke="#567f56" stroke-width="1.9" stroke-linecap="butt"/>
<line x1="122.21" y1="567.6" x2="130.61" y2="567.6" stroke="#567f56" stroke-width="1.9" stroke-linecap="butt"/>
<line x1="125.41" y1="572" x2="127.41" y2="572" stroke="#567f56" stroke-width="1.9" stroke-linecap="butt"/>
<path d="M103.76 408.6 L100.61 401.4 L97.46 408.6 Z" stroke="#567f56" stroke-width="1.7" fill="none" stroke-linejoin="round"/>
<path d="M100.61 408.6 L100.61 425.68" stroke="#567f56" stroke-width="1.9" fill="none" stroke-linejoin="miter"/>
<line x1="100.61" y1="425.68" x2="100.61" y2="434.28" stroke="#aa5450" stroke-width="1.9" stroke-linecap="butt"/>
<line x1="100.61" y1="460.1" x2="100.61" y2="468.7" stroke="#aa5450" stroke-width="1.9" stroke-linecap="butt"/>
<path d="M100.61 468.7 L100.61 477.3" stroke="#567f56" stroke-width="1.9" fill="none" stroke-linejoin="miter"/>
<circle cx="100.61" cy="477.3" r="1.5" fill="#2d552d"/>
<path d="M112.36 408.6 L109.21 401.4 L106.06 408.6 Z" stroke="#567f56" stroke-width="1.7" fill="none" stroke-linejoin="round"/>
<path d="M109.21 408.6 L109.21 425.68" stroke="#567f56" stroke-width="1.9" fill="none" stroke-linejoin="miter"/>
<line x1="109.21" y1="425.68" x2="109.21" y2="434.28" stroke="#aa5450" stroke-width="1.9" stroke-linecap="butt"/>
<line x1="109.21" y1="460.1" x2="109.21" y2="468.7" stroke="#aa5450" stroke-width="1.9" stroke-linecap="butt"/>
<path d="M109.21 468.7 L109.21 485.91" stroke="#567f56" stroke-width="1.9" fill="none" stroke-linejoin="miter"/>
<circle cx="109.21" cy="485.91" r="1.5" fill="#2d552d"/>
<rect x="97.61" y="434.28" width="6" height="25.82" fill="#c8c8a9" stroke="#aa5450" stroke-width="1.7"/>
<rect x="106.21" y="434.28" width="6" height="25.82" fill="#c8c8a9" stroke="#aa5450" stroke-width="1.7"/>
<line x1="186.62" y1="468.8" x2="186.62" y2="451.6" stroke="#aa5450" stroke-width="1.9" stroke-linecap="butt"/>
<path d="M186.62 451.6 L186.62 434.6" stroke="#567f56" stroke-width="1.9" fill="none" stroke-linejoin="miter"/>
<path d="M189.77 434.6 L186.62 427.4 L183.47 434.6 Z" stroke="#567f56" stroke-width="1.7" fill="none" stroke-linejoin="round"/>
<line x1="221.03" y1="468.8" x2="221.03" y2="451.6" stroke="#aa5450" stroke-width="1.9" stroke-linecap="butt"/>
<path d="M221.03 451.6 L221.03 434.6" stroke="#567f56" stroke-width="1.9" fill="none" stroke-linejoin="miter"/>
<path d="M224.18 434.6 L221.03 427.4 L217.88 434.6 Z" stroke="#567f56" stroke-width="1.7" fill="none" stroke-linejoin="round"/>
<line x1="203.82" y1="554.8" x2="203.82" y2="571.8" stroke="#aa5450" stroke-width="1.9" stroke-linecap="butt"/>
<path d="M203.82 571.8 L203.82 588.6" stroke="#567f56" stroke-width="1.9" fill="none" stroke-linejoin="miter"/>
<line x1="195.42" y1="588.6" x2="212.22" y2="588.6" stroke="#567f56" stroke-width="1.9" stroke-linecap="butt"/>
<line x1="199.62" y1="593.2" x2="208.02" y2="593.2" stroke="#567f56" stroke-width="1.9" stroke-linecap="butt"/>
<line x1="202.82" y1="597.6" x2="204.82" y2="597.6" stroke="#567f56" stroke-width="1.9" stroke-linecap="butt"/>
<line x1="256.03" y1="485.91" x2="272.63" y2="485.91" stroke="#aa5450" stroke-width="1.9" stroke-linecap="butt"/>
<line x1="256.03" y1="503.12" x2="272.63" y2="503.12" stroke="#aa5450" stroke-width="1.9" stroke-linecap="butt"/>
<line x1="256.03" y1="520.32" x2="272.63" y2="520.32" stroke="#aa5450" stroke-width="1.9" stroke-linecap="butt"/>
<line x1="256.03" y1="537.53" x2="272.63" y2="537.53" stroke="#aa5450" stroke-width="1.9" stroke-linecap="butt"/>
<path d="M272.63 485.91 L281.23 485.91 L281.23 468.8 L362.9 468.8 L362.9 494.51 L350.04 494.51 L350.04 503.12" stroke="#567f56" stroke-width="1.9" fill="none" stroke-linejoin="miter"/>
<path d="M272.63 503.12 L298.43 503.12" stroke="#567f56" stroke-width="1.9" fill="none" stroke-linejoin="miter"/>
<line x1="298.43" y1="503.12" x2="307.8" y2="503.12" stroke="#aa5450" stroke-width="1.9" stroke-linecap="butt"/>
<line x1="341.8" y1="503.12" x2="350.04" y2="503.12" stroke="#aa5450" stroke-width="1.9" stroke-linecap="butt"/>
<circle cx="324.8" cy="503.12" r="16.6" fill="#c8c8c8" stroke="#a43434" stroke-width="1.25"/>
<circle cx="324.8" cy="503.12" r="4" fill="#e6e6d8" stroke="#a43434" stroke-width="1.2"/>
<path d="M334.46 511.82A13.0 13.0 0 0 1 315.14 511.82A2.2 2.2 0 0 1 318.41 508.87A8.6 8.6 0 0 0 331.19 508.87A2.2 2.2 0 0 1 334.46 511.82Z" fill="#c8c8c8" stroke="#a43434" stroke-width="1.1"/>
<path d="M334.46 494.42A13.0 13.0 0 0 0 315.14 494.42A2.2 2.2 0 0 0 318.41 497.37A8.6 8.6 0 0 1 331.19 497.37A2.2 2.2 0 0 0 334.46 494.42Z" fill="#c8c8c8" stroke="#a43434" stroke-width="1.1"/>
<rect x="312.9" y="521.9" width="24.2" height="8.2" fill="#004400" stroke="#10e010" stroke-width="1.3"/>
<rect x="487.66" y="26.6" width="129" height="103" fill="#8a8a8a" stroke="#a84848" stroke-width="1.9"/>
<rect x="495.86" y="34.6" width="112.8" height="82.4" fill="#400000" stroke="#800000" stroke-width="1.0"/>
<line x1="551.86" y1="34.6" x2="551.86" y2="117" stroke="#900000" stroke-width="1.2" stroke-linecap="butt"/>
<path d="M511.14 46 L514.04 43.1 L536.04 43.1 L538.94 46 L536.04 48.9 L514.04 48.9 Z" stroke="#620000" stroke-width="0" fill="#620000" stroke-linejoin="miter"/>
<path d="M509.48 75.6 L512.38 72.7 L534.38 72.7 L537.28 75.6 L534.38 78.5 L512.38 78.5 Z" stroke="#620000" stroke-width="0" fill="#620000" stroke-linejoin="miter"/>
<path d="M507.86 104.6 L510.76 101.7 L532.76 101.7 L535.66 104.6 L532.76 107.5 L510.76 107.5 Z" stroke="#620000" stroke-width="0" fill="#620000" stroke-linejoin="miter"/>
<path d="M510.49 47 L513.22 49.9 L512 71.7 L508.94 74.6 L506.2 71.7 L507.42 49.9 Z" stroke="#620000" stroke-width="0" fill="#620000" stroke-linejoin="miter"/>
<path d="M508.83 76.6 L511.57 79.5 L510.38 100.7 L507.32 103.6 L504.58 100.7 L505.77 79.5 Z" stroke="#620000" stroke-width="0" fill="#620000" stroke-linejoin="miter"/>
<path d="M539.49 47 L542.22 49.9 L541 71.7 L537.94 74.6 L535.2 71.7 L536.42 49.9 Z" stroke="#620000" stroke-width="0" fill="#620000" stroke-linejoin="miter"/>
<path d="M537.83 76.6 L540.57 79.5 L539.38 100.7 L536.32 103.6 L533.58 100.7 L534.77 79.5 Z" stroke="#620000" stroke-width="0" fill="#620000" stroke-linejoin="miter"/>
<circle cx="543.26" cy="108.2" r="2.3" fill="#7a0808"/>
<path d="M566.74 46 L569.64 43.1 L591.64 43.1 L594.54 46 L591.64 48.9 L569.64 48.9 Z" stroke="#620000" stroke-width="0" fill="#620000" stroke-linejoin="miter"/>
<path d="M565.08 75.6 L567.98 72.7 L589.98 72.7 L592.88 75.6 L589.98 78.5 L567.98 78.5 Z" stroke="#620000" stroke-width="0" fill="#620000" stroke-linejoin="miter"/>
<path d="M563.46 104.6 L566.36 101.7 L588.36 101.7 L591.26 104.6 L588.36 107.5 L566.36 107.5 Z" stroke="#620000" stroke-width="0" fill="#620000" stroke-linejoin="miter"/>
<path d="M566.09 47 L568.82 49.9 L567.6 71.7 L564.54 74.6 L561.8 71.7 L563.02 49.9 Z" stroke="#620000" stroke-width="0" fill="#620000" stroke-linejoin="miter"/>
<path d="M564.43 76.6 L567.17 79.5 L565.98 100.7 L562.92 103.6 L560.18 100.7 L561.37 79.5 Z" stroke="#620000" stroke-width="0" fill="#620000" stroke-linejoin="miter"/>
<path d="M595.09 47 L597.82 49.9 L596.6 71.7 L593.54 74.6 L590.8 71.7 L592.02 49.9 Z" stroke="#620000" stroke-width="0" fill="#620000" stroke-linejoin="miter"/>
<path d="M593.43 76.6 L596.17 79.5 L594.98 100.7 L591.92 103.6 L589.18 100.7 L590.37 79.5 Z" stroke="#620000" stroke-width="0" fill="#620000" stroke-linejoin="miter"/>
<circle cx="598.86" cy="108.2" r="2.3" fill="#7a0808"/>
<line x1="496.26" y1="129.6" x2="496.26" y2="138" stroke="#aa5450" stroke-width="1.9" stroke-linecap="butt"/>
<path d="M496.26 138 L496.26 155.2" stroke="#567f56" stroke-width="1.9" fill="none" stroke-linejoin="miter"/>
<path d="M493.11 155.2 L496.26 162.4 L499.41 155.2 Z" stroke="#567f56" stroke-width="1.7" fill="none" stroke-linejoin="round"/>
<line x1="504.86" y1="129.6" x2="504.86" y2="138" stroke="#aa5450" stroke-width="1.9" stroke-linecap="butt"/>
<path d="M504.86 138 L504.86 155.2" stroke="#567f56" stroke-width="1.9" fill="none" stroke-linejoin="miter"/>
<path d="M501.71 155.2 L504.86 162.4 L508.01 155.2 Z" stroke="#567f56" stroke-width="1.7" fill="none" stroke-linejoin="round"/>
<line x1="513.46" y1="129.6" x2="513.46" y2="138" stroke="#aa5450" stroke-width="1.9" stroke-linecap="butt"/>
<path d="M513.46 138 L513.46 155.2" stroke="#567f56" stroke-width="1.9" fill="none" stroke-linejoin="miter"/>
<path d="M510.31 155.2 L513.46 162.4 L516.61 155.2 Z" stroke="#567f56" stroke-width="1.7" fill="none" stroke-linejoin="round"/>
<line x1="522.06" y1="129.6" x2="522.06" y2="138" stroke="#aa5450" stroke-width="1.9" stroke-linecap="butt"/>
<path d="M522.06 138 L522.06 155.2" stroke="#567f56" stroke-width="1.9" fill="none" stroke-linejoin="miter"/>
<path d="M518.91 155.2 L522.06 162.4 L525.21 155.2 Z" stroke="#567f56" stroke-width="1.7" fill="none" stroke-linejoin="round"/>
<line x1="530.66" y1="129.6" x2="530.66" y2="138" stroke="#aa5450" stroke-width="1.9" stroke-linecap="butt"/>
<path d="M530.66 138 L530.66 155.2" stroke="#567f56" stroke-width="1.9" fill="none" stroke-linejoin="miter"/>
<path d="M527.51 155.2 L530.66 162.4 L533.81 155.2 Z" stroke="#567f56" stroke-width="1.7" fill="none" stroke-linejoin="round"/>
<line x1="539.26" y1="129.6" x2="539.26" y2="138" stroke="#aa5450" stroke-width="1.9" stroke-linecap="butt"/>
<path d="M539.26 138 L539.26 155.2" stroke="#567f56" stroke-width="1.9" fill="none" stroke-linejoin="miter"/>
<path d="M536.11 155.2 L539.26 162.4 L542.41 155.2 Z" stroke="#567f56" stroke-width="1.7" fill="none" stroke-linejoin="round"/>
<line x1="547.86" y1="129.6" x2="547.86" y2="138" stroke="#aa5450" stroke-width="1.9" stroke-linecap="butt"/>
<path d="M547.86 138 L547.86 155.2" stroke="#567f56" stroke-width="1.9" fill="none" stroke-linejoin="miter"/>
<path d="M544.71 155.2 L547.86 162.4 L551.01 155.2 Z" stroke="#567f56" stroke-width="1.7" fill="none" stroke-linejoin="round"/>
<line x1="556.46" y1="129.6" x2="556.46" y2="138" stroke="#aa5450" stroke-width="1.9" stroke-linecap="butt"/>
<path d="M556.46 138 L556.46 155.2" stroke="#567f56" stroke-width="1.9" fill="none" stroke-linejoin="miter"/>
<path d="M553.31 155.2 L556.46 162.4 L559.61 155.2 Z" stroke="#567f56" stroke-width="1.7" fill="none" stroke-linejoin="round"/>
<line x1="590.86" y1="129.6" x2="590.86" y2="138" stroke="#aa5450" stroke-width="1.9" stroke-linecap="butt"/>
<path d="M590.86 138 L590.86 155.2" stroke="#567f56" stroke-width="1.9" fill="none" stroke-linejoin="miter"/>
<path d="M587.71 155.2 L590.86 162.4 L594.01 155.2 Z" stroke="#567f56" stroke-width="1.7" fill="none" stroke-linejoin="round"/>
<line x1="599.46" y1="129.6" x2="599.46" y2="138" stroke="#aa5450" stroke-width="1.9" stroke-linecap="butt"/>
<path d="M599.46 138 L599.46 155.2" stroke="#567f56" stroke-width="1.9" fill="none" stroke-linejoin="miter"/>
<path d="M596.31 155.2 L599.46 162.4 L602.61 155.2 Z" stroke="#567f56" stroke-width="1.7" fill="none" stroke-linejoin="round"/>
<rect x="616.67" y="26.6" width="129" height="103" fill="#8a8a8a" stroke="#a84848" stroke-width="1.9"/>
<rect x="624.87" y="34.6" width="112.8" height="82.4" fill="#400000" stroke="#800000" stroke-width="1.0"/>
<line x1="680.87" y1="34.6" x2="680.87" y2="117" stroke="#900000" stroke-width="1.2" stroke-linecap="butt"/>
<path d="M640.15 46 L643.05 43.1 L665.05 43.1 L667.95 46 L665.05 48.9 L643.05 48.9 Z" stroke="#620000" stroke-width="0" fill="#620000" stroke-linejoin="miter"/>
<path d="M638.49 75.6 L641.39 72.7 L663.39 72.7 L666.29 75.6 L663.39 78.5 L641.39 78.5 Z" stroke="#620000" stroke-width="0" fill="#620000" stroke-linejoin="miter"/>
<path d="M636.87 104.6 L639.77 101.7 L661.77 101.7 L664.67 104.6 L661.77 107.5 L639.77 107.5 Z" stroke="#620000" stroke-width="0" fill="#620000" stroke-linejoin="miter"/>
<path d="M639.5 47 L642.23 49.9 L641.01 71.7 L637.95 74.6 L635.21 71.7 L636.43 49.9 Z" stroke="#620000" stroke-width="0" fill="#620000" stroke-linejoin="miter"/>
<path d="M637.84 76.6 L640.58 79.5 L639.39 100.7 L636.33 103.6 L633.59 100.7 L634.78 79.5 Z" stroke="#620000" stroke-width="0" fill="#620000" stroke-linejoin="miter"/>
<path d="M668.5 47 L671.23 49.9 L670.01 71.7 L666.95 74.6 L664.21 71.7 L665.43 49.9 Z" stroke="#620000" stroke-width="0" fill="#620000" stroke-linejoin="miter"/>
<path d="M666.84 76.6 L669.58 79.5 L668.39 100.7 L665.33 103.6 L662.59 100.7 L663.78 79.5 Z" stroke="#620000" stroke-width="0" fill="#620000" stroke-linejoin="miter"/>
<circle cx="672.27" cy="108.2" r="2.3" fill="#7a0808"/>
<path d="M695.75 46 L698.65 43.1 L720.65 43.1 L723.55 46 L720.65 48.9 L698.65 48.9 Z" stroke="#620000" stroke-width="0" fill="#620000" stroke-linejoin="miter"/>
<path d="M694.09 75.6 L696.99 72.7 L718.99 72.7 L721.89 75.6 L718.99 78.5 L696.99 78.5 Z" stroke="#620000" stroke-width="0" fill="#620000" stroke-linejoin="miter"/>
<path d="M692.47 104.6 L695.37 101.7 L717.37 101.7 L720.27 104.6 L717.37 107.5 L695.37 107.5 Z" stroke="#620000" stroke-width="0" fill="#620000" stroke-linejoin="miter"/>
<path d="M695.1 47 L697.83 49.9 L696.61 71.7 L693.55 74.6 L690.81 71.7 L692.03 49.9 Z" stroke="#620000" stroke-width="0" fill="#620000" stroke-linejoin="miter"/>
<path d="M693.44 76.6 L696.18 79.5 L694.99 100.7 L691.93 103.6 L689.19 100.7 L690.38 79.5 Z" stroke="#620000" stroke-width="0" fill="#620000" stroke-linejoin="miter"/>
<path d="M724.1 47 L726.83 49.9 L725.61 71.7 L722.55 74.6 L719.81 71.7 L721.03 49.9 Z" stroke="#620000" stroke-width="0" fill="#620000" stroke-linejoin="miter"/>
<path d="M722.44 76.6 L725.18 79.5 L723.99 100.7 L720.93 103.6 L718.19 100.7 L719.38 79.5 Z" stroke="#620000" stroke-width="0" fill="#620000" stroke-linejoin="miter"/>
<circle cx="727.87" cy="108.2" r="2.3" fill="#7a0808"/>
<line x1="625.27" y1="129.6" x2="625.27" y2="138" stroke="#aa5450" stroke-width="1.9" stroke-linecap="butt"/>
<path d="M625.27 138 L625.27 155.2" stroke="#567f56" stroke-width="1.9" fill="none" stroke-linejoin="miter"/>
<path d="M622.12 155.2 L625.27 162.4 L628.42 155.2 Z" stroke="#567f56" stroke-width="1.7" fill="none" stroke-linejoin="round"/>
<line x1="633.87" y1="129.6" x2="633.87" y2="138" stroke="#aa5450" stroke-width="1.9" stroke-linecap="butt"/>
<path d="M633.87 138 L633.87 155.2" stroke="#567f56" stroke-width="1.9" fill="none" stroke-linejoin="miter"/>
<path d="M630.72 155.2 L633.87 162.4 L637.02 155.2 Z" stroke="#567f56" stroke-width="1.7" fill="none" stroke-linejoin="round"/>
<line x1="642.47" y1="129.6" x2="642.47" y2="138" stroke="#aa5450" stroke-width="1.9" stroke-linecap="butt"/>
<path d="M642.47 138 L642.47 155.2" stroke="#567f56" stroke-width="1.9" fill="none" stroke-linejoin="miter"/>
<path d="M639.32 155.2 L642.47 162.4 L645.62 155.2 Z" stroke="#567f56" stroke-width="1.7" fill="none" stroke-linejoin="round"/>
<line x1="651.07" y1="129.6" x2="651.07" y2="138" stroke="#aa5450" stroke-width="1.9" stroke-linecap="butt"/>
<path d="M651.07 138 L651.07 155.2" stroke="#567f56" stroke-width="1.9" fill="none" stroke-linejoin="miter"/>
<path d="M647.92 155.2 L651.07 162.4 L654.22 155.2 Z" stroke="#567f56" stroke-width="1.7" fill="none" stroke-linejoin="round"/>
<line x1="659.67" y1="129.6" x2="659.67" y2="138" stroke="#aa5450" stroke-width="1.9" stroke-linecap="butt"/>
<path d="M659.67 138 L659.67 155.2" stroke="#567f56" stroke-width="1.9" fill="none" stroke-linejoin="miter"/>
<path d="M656.52 155.2 L659.67 162.4 L662.82 155.2 Z" stroke="#567f56" stroke-width="1.7" fill="none" stroke-linejoin="round"/>
<line x1="668.27" y1="129.6" x2="668.27" y2="138" stroke="#aa5450" stroke-width="1.9" stroke-linecap="butt"/>
<path d="M668.27 138 L668.27 155.2" stroke="#567f56" stroke-width="1.9" fill="none" stroke-linejoin="miter"/>
<path d="M665.12 155.2 L668.27 162.4 L671.42 155.2 Z" stroke="#567f56" stroke-width="1.7" fill="none" stroke-linejoin="round"/>
<line x1="676.87" y1="129.6" x2="676.87" y2="138" stroke="#aa5450" stroke-width="1.9" stroke-linecap="butt"/>
<path d="M676.87 138 L676.87 155.2" stroke="#567f56" stroke-width="1.9" fill="none" stroke-linejoin="miter"/>
<path d="M673.72 155.2 L676.87 162.4 L680.02 155.2 Z" stroke="#567f56" stroke-width="1.7" fill="none" stroke-linejoin="round"/>
<line x1="685.47" y1="129.6" x2="685.47" y2="138" stroke="#aa5450" stroke-width="1.9" stroke-linecap="butt"/>
<path d="M685.47 138 L685.47 155.2" stroke="#567f56" stroke-width="1.9" fill="none" stroke-linejoin="miter"/>
<path d="M682.32 155.2 L685.47 162.4 L688.62 155.2 Z" stroke="#567f56" stroke-width="1.7" fill="none" stroke-linejoin="round"/>
<line x1="719.87" y1="129.6" x2="719.87" y2="138" stroke="#aa5450" stroke-width="1.9" stroke-linecap="butt"/>
<path d="M719.87 138 L719.87 155.2" stroke="#567f56" stroke-width="1.9" fill="none" stroke-linejoin="miter"/>
<path d="M716.72 155.2 L719.87 162.4 L723.02 155.2 Z" stroke="#567f56" stroke-width="1.7" fill="none" stroke-linejoin="round"/>
<line x1="728.47" y1="129.6" x2="728.47" y2="138" stroke="#aa5450" stroke-width="1.9" stroke-linecap="butt"/>
<path d="M728.47 138 L728.47 155.2" stroke="#567f56" stroke-width="1.9" fill="none" stroke-linejoin="miter"/>
<path d="M725.32 155.2 L728.47 162.4 L731.62 155.2 Z" stroke="#567f56" stroke-width="1.7" fill="none" stroke-linejoin="round"/>
<line x1="547.87" y1="254.2" x2="571.67" y2="254.2" stroke="#aa5450" stroke-width="1.9" stroke-linecap="butt"/>
<line x1="547.87" y1="271.8" x2="571.67" y2="271.8" stroke="#aa5450" stroke-width="1.9" stroke-linecap="butt"/>
<path d="M547.87 254.2 L539.27 254.2 L539.27 271.8 L547.87 271.8" stroke="#567f56" stroke-width="1.9" fill="none" stroke-linejoin="miter"/>
<path d="M539.27 263 L522.07 263" stroke="#567f56" stroke-width="1.9" fill="none" stroke-linejoin="miter"/>
<circle cx="539.27" cy="263" r="1.5" fill="#2d552d"/>
<path d="M522.07 259.85 L514.87 263 L522.07 266.15 Z" stroke="#567f56" stroke-width="1.7" fill="none" stroke-linejoin="round"/>
<path d="M565.07 246L583.07 246C599.07 246 611.07 255 616.27 263C611.07 271 599.07 280 583.07 280L565.07 280Q580.07 263 565.07 246Z" fill="#c8c8a9" stroke="#a44646" stroke-width="1.4" stroke-linejoin="round"/>
<circle cx="618.87" cy="263" r="2.3" fill="#e0e0d0" stroke="#aa5450" stroke-width="1.3"/>
<line x1="621.27" y1="263" x2="633.87" y2="263" stroke="#aa5450" stroke-width="1.9" stroke-linecap="butt"/>
<path d="M633.87 263 L651.07 263" stroke="#567f56" stroke-width="1.9" fill="none" stroke-linejoin="miter"/>
<path d="M651.07 266.15 L658.27 263 L651.07 259.85 Z" stroke="#567f56" stroke-width="1.7" fill="none" stroke-linejoin="round"/>
<line x1="728.49" y1="254.2" x2="752.29" y2="254.2" stroke="#aa5450" stroke-width="1.9" stroke-linecap="butt"/>
<line x1="728.49" y1="271.8" x2="752.29" y2="271.8" stroke="#aa5450" stroke-width="1.9" stroke-linecap="butt"/>
<path d="M728.49 254.2 L719.89 254.2 L719.89 271.8 L728.49 271.8" stroke="#567f56" stroke-width="1.9" fill="none" stroke-linejoin="miter"/>
<path d="M719.89 263 L702.69 263" stroke="#567f56" stroke-width="1.9" fill="none" stroke-linejoin="miter"/>
<circle cx="719.89" cy="263" r="1.5" fill="#2d552d"/>
<path d="M702.69 259.85 L695.49 263 L702.69 266.15 Z" stroke="#567f56" stroke-width="1.7" fill="none" stroke-linejoin="round"/>
<path d="M745.69 246L763.69 246C779.69 246 791.69 255 796.89 263C791.69 271 779.69 280 763.69 280L745.69 280Q760.69 263 745.69 246Z" fill="#c8c8a9" stroke="#a44646" stroke-width="1.4" stroke-linejoin="round"/>
<circle cx="799.49" cy="263" r="2.3" fill="#e0e0d0" stroke="#aa5450" stroke-width="1.3"/>
<line x1="801.89" y1="263" x2="814.49" y2="263" stroke="#aa5450" stroke-width="1.9" stroke-linecap="butt"/>
<path d="M814.49 263 L831.69 263" stroke="#567f56" stroke-width="1.9" fill="none" stroke-linejoin="miter"/>
<path d="M831.69 266.15 L838.89 263 L831.69 259.85 Z" stroke="#567f56" stroke-width="1.7" fill="none" stroke-linejoin="round"/>
<line x1="547.87" y1="348.3" x2="571.67" y2="348.3" stroke="#aa5450" stroke-width="1.9" stroke-linecap="butt"/>
<line x1="547.87" y1="365.9" x2="571.67" y2="365.9" stroke="#aa5450" stroke-width="1.9" stroke-linecap="butt"/>
<path d="M547.87 348.3 L539.27 348.3 L539.27 365.9 L547.87 365.9" stroke="#567f56" stroke-width="1.9" fill="none" stroke-linejoin="miter"/>
<path d="M539.27 357.1 L522.07 357.1" stroke="#567f56" stroke-width="1.9" fill="none" stroke-linejoin="miter"/>
<circle cx="539.27" cy="357.1" r="1.5" fill="#2d552d"/>
<path d="M522.07 353.95 L514.87 357.1 L522.07 360.25 Z" stroke="#567f56" stroke-width="1.7" fill="none" stroke-linejoin="round"/>
<path d="M565.07 340.1L583.07 340.1C599.07 340.1 611.07 349.1 616.27 357.1C611.07 365.1 599.07 374.1 583.07 374.1L565.07 374.1Q580.07 357.1 565.07 340.1Z" fill="#c8c8a9" stroke="#a44646" stroke-width="1.4" stroke-linejoin="round"/>
<circle cx="618.87" cy="357.1" r="2.3" fill="#e0e0d0" stroke="#aa5450" stroke-width="1.3"/>
<line x1="621.27" y1="357.1" x2="633.87" y2="357.1" stroke="#aa5450" stroke-width="1.9" stroke-linecap="butt"/>
<path d="M633.87 357.1 L651.07 357.1" stroke="#567f56" stroke-width="1.9" fill="none" stroke-linejoin="miter"/>
<path d="M651.07 360.25 L658.27 357.1 L651.07 353.95 Z" stroke="#567f56" stroke-width="1.7" fill="none" stroke-linejoin="round"/>
<line x1="728.49" y1="348.3" x2="752.29" y2="348.3" stroke="#aa5450" stroke-width="1.9" stroke-linecap="butt"/>
<line x1="728.49" y1="365.9" x2="752.29" y2="365.9" stroke="#aa5450" stroke-width="1.9" stroke-linecap="butt"/>
<path d="M728.49 348.3 L719.89 348.3 L719.89 365.9 L728.49 365.9" stroke="#567f56" stroke-width="1.9" fill="none" stroke-linejoin="miter"/>
<path d="M719.89 357.1 L702.69 357.1" stroke="#567f56" stroke-width="1.9" fill="none" stroke-linejoin="miter"/>
<circle cx="719.89" cy="357.1" r="1.5" fill="#2d552d"/>
<path d="M702.69 353.95 L695.49 357.1 L702.69 360.25 Z" stroke="#567f56" stroke-width="1.7" fill="none" stroke-linejoin="round"/>
<path d="M745.69 340.1L763.69 340.1C779.69 340.1 791.69 349.1 796.89 357.1C791.69 365.1 779.69 374.1 763.69 374.1L745.69 374.1Q760.69 357.1 745.69 340.1Z" fill="#c8c8a9" stroke="#a44646" stroke-width="1.4" stroke-linejoin="round"/>
<circle cx="799.49" cy="357.1" r="2.3" fill="#e0e0d0" stroke="#aa5450" stroke-width="1.3"/>
<line x1="801.89" y1="357.1" x2="814.49" y2="357.1" stroke="#aa5450" stroke-width="1.9" stroke-linecap="butt"/>
<path d="M814.49 357.1 L831.69 357.1" stroke="#567f56" stroke-width="1.9" fill="none" stroke-linejoin="miter"/>
<path d="M831.69 360.25 L838.89 357.1 L831.69 353.95 Z" stroke="#567f56" stroke-width="1.7" fill="none" stroke-linejoin="round"/>
<line x1="792.99" y1="38.9" x2="802.89" y2="38.9" stroke="#aa5450" stroke-width="1.9" stroke-linecap="butt"/>
<line x1="826.09" y1="38.9" x2="835.99" y2="38.9" stroke="#aa5450" stroke-width="1.9" stroke-linecap="butt"/>
<circle cx="804.49" cy="38.9" r="1.8" fill="#e0e0d0" stroke="#aa5450" stroke-width="1.3"/>
<circle cx="824.49" cy="38.9" r="1.8" fill="#e0e0d0" stroke="#aa5450" stroke-width="1.3"/>
<line x1="802.69" y1="32.2" x2="826.29" y2="32.2" stroke="#aa5450" stroke-width="1.5" stroke-linecap="butt"/>
<rect x="807.09" y="28" width="14.8" height="4" fill="#d8d8bc" stroke="#aa5450" stroke-width="1.4"/>
<circle cx="831.09" cy="30.3" r="3.1" fill="#e00000"/><circle cx="831.09" cy="30.3" r="1.2" fill="#500000"/>
<path d="M792.99 38.9 L780.09 38.9" stroke="#567f56" stroke-width="1.9" fill="none" stroke-linejoin="miter"/>
<path d="M780.09 35.75 L772.89 38.9 L780.09 42.05 Z" stroke="#567f56" stroke-width="1.7" fill="none" stroke-linejoin="round"/>
<line x1="792.99" y1="159.6" x2="802.89" y2="159.6" stroke="#aa5450" stroke-width="1.9" stroke-linecap="butt"/>
<line x1="826.09" y1="159.6" x2="835.99" y2="159.6" stroke="#aa5450" stroke-width="1.9" stroke-linecap="butt"/>
<circle cx="804.49" cy="159.6" r="1.8" fill="#e0e0d0" stroke="#aa5450" stroke-width="1.3"/>
<circle cx="824.49" cy="159.6" r="1.8" fill="#e0e0d0" stroke="#aa5450" stroke-width="1.3"/>
<line x1="802.69" y1="152.9" x2="826.29" y2="152.9" stroke="#aa5450" stroke-width="1.5" stroke-linecap="butt"/>
<rect x="807.09" y="148.7" width="14.8" height="4" fill="#d8d8bc" stroke="#aa5450" stroke-width="1.4"/>
<circle cx="831.09" cy="151" r="3.1" fill="#e00000"/><circle cx="831.09" cy="151" r="1.2" fill="#500000"/>
<path d="M792.99 159.6 L780.09 159.6" stroke="#567f56" stroke-width="1.9" fill="none" stroke-linejoin="miter"/>
<path d="M780.09 156.45 L772.89 159.6 L780.09 162.75 Z" stroke="#567f56" stroke-width="1.7" fill="none" stroke-linejoin="round"/>
<path d="M835.99 38.9 L848.1 38.9 L848.1 176.9" stroke="#567f56" stroke-width="1.9" fill="none" stroke-linejoin="miter"/>
<path d="M835.99 159.6 L848.1 159.6" stroke="#567f56" stroke-width="1.9" fill="none" stroke-linejoin="miter"/>
<circle cx="848.1" cy="159.6" r="1.5" fill="#2d552d"/>
<line x1="839.7" y1="176.9" x2="856.5" y2="176.9" stroke="#567f56" stroke-width="1.9" stroke-linecap="butt"/>
<line x1="843.9" y1="181.5" x2="852.3" y2="181.5" stroke="#567f56" stroke-width="1.9" stroke-linecap="butt"/>
<line x1="847.1" y1="185.9" x2="849.1" y2="185.9" stroke="#567f56" stroke-width="1.9" stroke-linecap="butt"/>
<line x1="405.95" y1="485.91" x2="415.85" y2="485.91" stroke="#aa5450" stroke-width="1.9" stroke-linecap="butt"/>
<line x1="439.05" y1="485.91" x2="448.95" y2="485.91" stroke="#aa5450" stroke-width="1.9" stroke-linecap="butt"/>
<circle cx="417.45" cy="485.91" r="1.8" fill="#e0e0d0" stroke="#aa5450" stroke-width="1.3"/>
<circle cx="437.45" cy="485.91" r="1.8" fill="#e0e0d0" stroke="#aa5450" stroke-width="1.3"/>
<line x1="415.65" y1="479.21" x2="439.25" y2="479.21" stroke="#aa5450" stroke-width="1.5" stroke-linecap="butt"/>
<rect x="420.05" y="475.01" width="14.8" height="4" fill="#d8d8bc" stroke="#aa5450" stroke-width="1.4"/>
<circle cx="444.05" cy="477.31" r="3.1" fill="#e00000"/><circle cx="444.05" cy="477.31" r="1.2" fill="#500000"/>
<path d="M404.8 468.8 L401.65 461.6 L398.5 468.8 Z" stroke="#567f56" stroke-width="1.7" fill="none" stroke-linejoin="round"/>
<path d="M401.65 468.8 L401.65 485.91 L405.95 485.91" stroke="#567f56" stroke-width="1.9" fill="none" stroke-linejoin="miter"/>
<path d="M448.95 485.91 L453.25 485.91 L453.25 502.8" stroke="#567f56" stroke-width="1.9" fill="none" stroke-linejoin="miter"/>
<line x1="444.85" y1="502.8" x2="461.65" y2="502.8" stroke="#567f56" stroke-width="1.9" stroke-linecap="butt"/>
<line x1="449.05" y1="507.4" x2="457.45" y2="507.4" stroke="#567f56" stroke-width="1.9" stroke-linecap="butt"/>
<line x1="452.25" y1="511.8" x2="454.25" y2="511.8" stroke="#567f56" stroke-width="1.9" stroke-linecap="butt"/>
<line x1="491.96" y1="485.91" x2="501.86" y2="485.91" stroke="#aa5450" stroke-width="1.9" stroke-linecap="butt"/>
<line x1="525.06" y1="485.91" x2="534.96" y2="485.91" stroke="#aa5450" stroke-width="1.9" stroke-linecap="butt"/>
<circle cx="503.46" cy="485.91" r="1.8" fill="#e0e0d0" stroke="#aa5450" stroke-width="1.3"/>
<circle cx="523.46" cy="485.91" r="1.8" fill="#e0e0d0" stroke="#aa5450" stroke-width="1.3"/>
<line x1="501.66" y1="479.21" x2="525.26" y2="479.21" stroke="#aa5450" stroke-width="1.5" stroke-linecap="butt"/>
<rect x="506.06" y="475.01" width="14.8" height="4" fill="#d8d8bc" stroke="#aa5450" stroke-width="1.4"/>
<circle cx="530.06" cy="477.31" r="3.1" fill="#e00000"/><circle cx="530.06" cy="477.31" r="1.2" fill="#500000"/>
<path d="M482.21 468.8 L479.06 461.6 L475.91 468.8 Z" stroke="#567f56" stroke-width="1.7" fill="none" stroke-linejoin="round"/>
<path d="M479.06 468.8 L479.06 485.91 L491.96 485.91" stroke="#567f56" stroke-width="1.9" fill="none" stroke-linejoin="miter"/>
<path d="M534.96 485.91 L539.26 485.91 L539.26 502.8" stroke="#567f56" stroke-width="1.9" fill="none" stroke-linejoin="miter"/>
<line x1="530.86" y1="502.8" x2="547.66" y2="502.8" stroke="#567f56" stroke-width="1.9" stroke-linecap="butt"/>
<line x1="535.06" y1="507.4" x2="543.46" y2="507.4" stroke="#567f56" stroke-width="1.9" stroke-linecap="butt"/>
<line x1="538.26" y1="511.8" x2="540.26" y2="511.8" stroke="#567f56" stroke-width="1.9" stroke-linecap="butt"/>
<line x1="573.67" y1="485.91" x2="583.57" y2="485.91" stroke="#aa5450" stroke-width="1.9" stroke-linecap="butt"/>
<line x1="606.77" y1="485.91" x2="616.67" y2="485.91" stroke="#aa5450" stroke-width="1.9" stroke-linecap="butt"/>
<circle cx="585.17" cy="485.91" r="1.8" fill="#e0e0d0" stroke="#aa5450" stroke-width="1.3"/>
<circle cx="605.17" cy="485.91" r="1.8" fill="#e0e0d0" stroke="#aa5450" stroke-width="1.3"/>
<line x1="583.37" y1="479.21" x2="606.97" y2="479.21" stroke="#aa5450" stroke-width="1.5" stroke-linecap="butt"/>
<rect x="587.77" y="475.01" width="14.8" height="4" fill="#d8d8bc" stroke="#aa5450" stroke-width="1.4"/>
<circle cx="611.77" cy="477.31" r="3.1" fill="#e00000"/><circle cx="611.77" cy="477.31" r="1.2" fill="#500000"/>
<path d="M572.52 468.8 L569.37 461.6 L566.22 468.8 Z" stroke="#567f56" stroke-width="1.7" fill="none" stroke-linejoin="round"/>
<path d="M569.37 468.8 L569.37 485.91 L573.67 485.91" stroke="#567f56" stroke-width="1.9" fill="none" stroke-linejoin="miter"/>
<path d="M616.67 485.91 L620.97 485.91 L620.97 502.8" stroke="#567f56" stroke-width="1.9" fill="none" stroke-linejoin="miter"/>
<line x1="612.57" y1="502.8" x2="629.37" y2="502.8" stroke="#567f56" stroke-width="1.9" stroke-linecap="butt"/>
<line x1="616.77" y1="507.4" x2="625.17" y2="507.4" stroke="#567f56" stroke-width="1.9" stroke-linecap="butt"/>
<line x1="619.97" y1="511.8" x2="621.97" y2="511.8" stroke="#567f56" stroke-width="1.9" stroke-linecap="butt"/>
<line x1="651.08" y1="485.91" x2="660.98" y2="485.91" stroke="#aa5450" stroke-width="1.9" stroke-linecap="butt"/>
<line x1="684.18" y1="485.91" x2="694.08" y2="485.91" stroke="#aa5450" stroke-width="1.9" stroke-linecap="butt"/>
<circle cx="662.58" cy="485.91" r="1.8" fill="#e0e0d0" stroke="#aa5450" stroke-width="1.3"/>
<circle cx="682.58" cy="485.91" r="1.8" fill="#e0e0d0" stroke="#aa5450" stroke-width="1.3"/>
<line x1="660.78" y1="479.21" x2="684.38" y2="479.21" stroke="#aa5450" stroke-width="1.5" stroke-linecap="butt"/>
<rect x="665.18" y="475.01" width="14.8" height="4" fill="#d8d8bc" stroke="#aa5450" stroke-width="1.4"/>
<circle cx="689.18" cy="477.31" r="3.1" fill="#e00000"/><circle cx="689.18" cy="477.31" r="1.2" fill="#500000"/>
<path d="M649.92 468.8 L646.77 461.6 L643.62 468.8 Z" stroke="#567f56" stroke-width="1.7" fill="none" stroke-linejoin="round"/>
<path d="M646.77 468.8 L646.77 485.91 L651.08 485.91" stroke="#567f56" stroke-width="1.9" fill="none" stroke-linejoin="miter"/>
<path d="M694.08 485.91 L698.38 485.91 L698.38 502.8" stroke="#567f56" stroke-width="1.9" fill="none" stroke-linejoin="miter"/>
<line x1="689.98" y1="502.8" x2="706.78" y2="502.8" stroke="#567f56" stroke-width="1.9" stroke-linecap="butt"/>
<line x1="694.18" y1="507.4" x2="702.58" y2="507.4" stroke="#567f56" stroke-width="1.9" stroke-linecap="butt"/>
<line x1="697.38" y1="511.8" x2="699.38" y2="511.8" stroke="#567f56" stroke-width="1.9" stroke-linecap="butt"/>
<line x1="728.49" y1="485.91" x2="738.39" y2="485.91" stroke="#aa5450" stroke-width="1.9" stroke-linecap="butt"/>
<line x1="761.59" y1="485.91" x2="771.49" y2="485.91" stroke="#aa5450" stroke-width="1.9" stroke-linecap="butt"/>
<circle cx="739.99" cy="485.91" r="1.8" fill="#e0e0d0" stroke="#aa5450" stroke-width="1.3"/>
<circle cx="759.99" cy="485.91" r="1.8" fill="#e0e0d0" stroke="#aa5450" stroke-width="1.3"/>
<line x1="738.19" y1="479.21" x2="761.79" y2="479.21" stroke="#aa5450" stroke-width="1.5" stroke-linecap="butt"/>
<rect x="742.59" y="475.01" width="14.8" height="4" fill="#d8d8bc" stroke="#aa5450" stroke-width="1.4"/>
<circle cx="766.59" cy="477.31" r="3.1" fill="#e00000"/><circle cx="766.59" cy="477.31" r="1.2" fill="#500000"/>
<path d="M727.33 468.8 L724.18 461.6 L721.03 468.8 Z" stroke="#567f56" stroke-width="1.7" fill="none" stroke-linejoin="round"/>
<path d="M724.18 468.8 L724.18 485.91 L728.49 485.91" stroke="#567f56" stroke-width="1.9" fill="none" stroke-linejoin="miter"/>
<path d="M771.49 485.91 L775.79 485.91 L775.79 502.8" stroke="#567f56" stroke-width="1.9" fill="none" stroke-linejoin="miter"/>
<line x1="767.39" y1="502.8" x2="784.19" y2="502.8" stroke="#567f56" stroke-width="1.9" stroke-linecap="butt"/>
<line x1="771.59" y1="507.4" x2="779.99" y2="507.4" stroke="#567f56" stroke-width="1.9" stroke-linecap="butt"/>
<line x1="774.79" y1="511.8" x2="776.79" y2="511.8" stroke="#567f56" stroke-width="1.9" stroke-linecap="butt"/>
</svg>
<div id="t">
<span style="left:59.91px;top:51.6px;font-size:6px;transform:rotate(-90deg) translate(0,-0.8465em);font-weight:bold;">P3.7</span>
<span style="left:56.01px;top:107.4px;font-size:6px;transform:rotate(-90deg) translate(0,-0.8465em);">17</span>
<span style="left:59.91px;top:120.8px;font-size:6px;transform:rotate(-90deg) translate(-100%,-0.8465em);">P3.7/RD</span>
<span style="left:68.51px;top:51.6px;font-size:6px;transform:rotate(-90deg) translate(0,-0.8465em);font-weight:bold;">P3.6</span>
<span style="left:64.61px;top:107.4px;font-size:6px;transform:rotate(-90deg) translate(0,-0.8465em);">16</span>
<span style="left:68.51px;top:120.8px;font-size:6px;transform:rotate(-90deg) translate(-100%,-0.8465em);">P3.6/WR</span>
<span style="left:77.11px;top:51.6px;font-size:6px;transform:rotate(-90deg) translate(0,-0.8465em);font-weight:bold;">P3.5</span>
<span style="left:73.21px;top:107.4px;font-size:6px;transform:rotate(-90deg) translate(0,-0.8465em);">15</span>
<span style="left:77.11px;top:120.8px;font-size:6px;transform:rotate(-90deg) translate(-100%,-0.8465em);">P3.5/T1</span>
<span style="left:85.71px;top:51.6px;font-size:6px;transform:rotate(-90deg) translate(0,-0.8465em);font-weight:bold;">P3.4</span>
<span style="left:81.81px;top:107.4px;font-size:6px;transform:rotate(-90deg) translate(0,-0.8465em);">14</span>
<span style="left:85.71px;top:120.8px;font-size:6px;transform:rotate(-90deg) translate(-100%,-0.8465em);">P3.4/T0</span>
<span style="left:94.31px;top:51.6px;font-size:6px;transform:rotate(-90deg) translate(0,-0.8465em);font-weight:bold;">P3.3</span>
<span style="left:90.41px;top:107.4px;font-size:6px;transform:rotate(-90deg) translate(0,-0.8465em);">13</span>
<span style="left:94.31px;top:120.8px;font-size:6px;transform:rotate(-90deg) translate(-100%,-0.8465em);">P3.3/INT1</span>
<span style="left:102.91px;top:51.6px;font-size:6px;transform:rotate(-90deg) translate(0,-0.8465em);font-weight:bold;">P3.2</span>
<span style="left:99.01px;top:107.4px;font-size:6px;transform:rotate(-90deg) translate(0,-0.8465em);">12</span>
<span style="left:102.91px;top:120.8px;font-size:6px;transform:rotate(-90deg) translate(-100%,-0.8465em);">P3.2/INT0</span>
<span style="left:111.51px;top:51.6px;font-size:6px;transform:rotate(-90deg) translate(0,-0.8465em);font-weight:bold;">P3.1</span>
<span style="left:107.61px;top:107.4px;font-size:6px;transform:rotate(-90deg) translate(0,-0.8465em);">11</span>
<span style="left:111.51px;top:120.8px;font-size:6px;transform:rotate(-90deg) translate(-100%,-0.8465em);">P3.1/TXD</span>
<span style="left:120.11px;top:51.6px;font-size:6px;transform:rotate(-90deg) translate(0,-0.8465em);font-weight:bold;">P3.0</span>
<span style="left:116.21px;top:107.4px;font-size:6px;transform:rotate(-90deg) translate(0,-0.8465em);">10</span>
<span style="left:120.11px;top:120.8px;font-size:6px;transform:rotate(-90deg) translate(-100%,-0.8465em);">P3.0/RXD</span>
<span style="left:137.32px;top:69.2px;font-size:6px;transform:rotate(-90deg) translate(0,-0.8465em);font-weight:bold;">P2.7</span>
<span style="left:133.42px;top:107.6px;font-size:6px;transform:rotate(-90deg) translate(0,-0.8465em);">28</span>
<span style="left:137.32px;top:120.8px;font-size:6px;transform:rotate(-90deg) translate(-100%,-0.8465em);">P2.7/A15</span>
<span style="left:145.92px;top:69.2px;font-size:6px;transform:rotate(-90deg) translate(0,-0.8465em);font-weight:bold;">P2.6</span>
<span style="left:142.02px;top:107.6px;font-size:6px;transform:rotate(-90deg) translate(0,-0.8465em);">27</span>
<span style="left:145.92px;top:120.8px;font-size:6px;transform:rotate(-90deg) translate(-100%,-0.8465em);">P2.6/A14</span>
<span style="left:154.52px;top:69.2px;font-size:6px;transform:rotate(-90deg) translate(0,-0.8465em);font-weight:bold;">P2.5</span>
<span style="left:150.62px;top:107.6px;font-size:6px;transform:rotate(-90deg) translate(0,-0.8465em);">26</span>
<span style="left:154.52px;top:120.8px;font-size:6px;transform:rotate(-90deg) translate(-100%,-0.8465em);">P2.5/A13</span>
<span style="left:163.12px;top:69.2px;font-size:6px;transform:rotate(-90deg) translate(0,-0.8465em);font-weight:bold;">P2.4</span>
<span style="left:159.22px;top:107.6px;font-size:6px;transform:rotate(-90deg) translate(0,-0.8465em);">25</span>
<span style="left:163.12px;top:120.8px;font-size:6px;transform:rotate(-90deg) translate(-100%,-0.8465em);">P2.4/A12</span>
<span style="left:171.72px;top:69.2px;font-size:6px;transform:rotate(-90deg) translate(0,-0.8465em);font-weight:bold;">P2.3</span>
<span style="left:167.82px;top:107.6px;font-size:6px;transform:rotate(-90deg) translate(0,-0.8465em);">24</span>
<span style="left:171.72px;top:120.8px;font-size:6px;transform:rotate(-90deg) translate(-100%,-0.8465em);">P2.3/A11</span>
<span style="left:180.32px;top:69.2px;font-size:6px;transform:rotate(-90deg) translate(0,-0.8465em);font-weight:bold;">P2.2</span>
<span style="left:176.42px;top:107.6px;font-size:6px;transform:rotate(-90deg) translate(0,-0.8465em);">23</span>
<span style="left:180.32px;top:120.8px;font-size:6px;transform:rotate(-90deg) translate(-100%,-0.8465em);">P2.2/A10</span>
<span style="left:188.92px;top:69.2px;font-size:6px;transform:rotate(-90deg) translate(0,-0.8465em);font-weight:bold;">P2.1</span>
<span style="left:185.02px;top:107.6px;font-size:6px;transform:rotate(-90deg) translate(0,-0.8465em);">22</span>
<span style="left:188.92px;top:120.8px;font-size:6px;transform:rotate(-90deg) translate(-100%,-0.8465em);">P2.1/A9</span>
<span style="left:197.52px;top:69.2px;font-size:6px;transform:rotate(-90deg) translate(0,-0.8465em);font-weight:bold;">P2.0</span>
<span style="left:193.62px;top:107.6px;font-size:6px;transform:rotate(-90deg) translate(0,-0.8465em);">21</span>
<span style="left:197.52px;top:120.8px;font-size:6px;transform:rotate(-90deg) translate(-100%,-0.8465em);">P2.0/A8</span>
<span style="left:214.42px;top:18.4px;font-size:6.4px;transform:rotate(-90deg) translate(0,-0.8465em);">h</span>
<span style="left:210.82px;top:107.6px;font-size:6px;transform:rotate(-90deg) translate(0,-0.8465em);">32</span>
<span style="left:214.72px;top:120.8px;font-size:6px;transform:rotate(-90deg) translate(-100%,-0.8465em);">P0.7/AD7</span>
<span style="left:223.03px;top:18.4px;font-size:6.4px;transform:rotate(-90deg) translate(0,-0.8465em);">g</span>
<span style="left:219.43px;top:107.6px;font-size:6px;transform:rotate(-90deg) translate(0,-0.8465em);">33</span>
<span style="left:223.33px;top:120.8px;font-size:6px;transform:rotate(-90deg) translate(-100%,-0.8465em);">P0.6/AD6</span>
<span style="left:231.63px;top:18.4px;font-size:6.4px;transform:rotate(-90deg) translate(0,-0.8465em);">f</span>
<span style="left:228.03px;top:107.6px;font-size:6px;transform:rotate(-90deg) translate(0,-0.8465em);">34</span>
<span style="left:231.93px;top:120.8px;font-size:6px;transform:rotate(-90deg) translate(-100%,-0.8465em);">P0.5/AD5</span>
<span style="left:240.23px;top:18.4px;font-size:6.4px;transform:rotate(-90deg) translate(0,-0.8465em);">e</span>
<span style="left:236.63px;top:107.6px;font-size:6px;transform:rotate(-90deg) translate(0,-0.8465em);">35</span>
<span style="left:240.53px;top:120.8px;font-size:6px;transform:rotate(-90deg) translate(-100%,-0.8465em);">P0.4/AD4</span>
<span style="left:248.83px;top:18.4px;font-size:6.4px;transform:rotate(-90deg) translate(0,-0.8465em);">d</span>
<span style="left:245.23px;top:107.6px;font-size:6px;transform:rotate(-90deg) translate(0,-0.8465em);">36</span>
<span style="left:249.13px;top:120.8px;font-size:6px;transform:rotate(-90deg) translate(-100%,-0.8465em);">P0.3/AD3</span>
<span style="left:257.43px;top:18.4px;font-size:6.4px;transform:rotate(-90deg) translate(0,-0.8465em);">c</span>
<span style="left:253.83px;top:107.6px;font-size:6px;transform:rotate(-90deg) translate(0,-0.8465em);">37</span>
<span style="left:257.73px;top:120.8px;font-size:6px;transform:rotate(-90deg) translate(-100%,-0.8465em);">P0.2/AD2</span>
<span style="left:266.03px;top:18.4px;font-size:6.4px;transform:rotate(-90deg) translate(0,-0.8465em);">b</span>
<span style="left:262.43px;top:107.6px;font-size:6px;transform:rotate(-90deg) translate(0,-0.8465em);">38</span>
<span style="left:266.33px;top:120.8px;font-size:6px;transform:rotate(-90deg) translate(-100%,-0.8465em);">P0.1/AD1</span>
<span style="left:274.63px;top:18.4px;font-size:6.4px;transform:rotate(-90deg) translate(0,-0.8465em);">a</span>
<span style="left:271.03px;top:107.6px;font-size:6px;transform:rotate(-90deg) translate(0,-0.8465em);">39</span>
<span style="left:274.93px;top:120.8px;font-size:6px;transform:rotate(-90deg) translate(-100%,-0.8465em);">P0.0/AD0</span>
<span style="left:222.72px;top:65.2px;font-size:8.7px;transform:translate(0,-0.8465em);-webkit-text-stroke:0.22px currentColor;letter-spacing:0.1px;">R8</span>
<span style="left:222.72px;top:75.2px;font-size:5.7px;transform:translate(0,-0.8465em);font-weight:bold;">220R</span>
<span style="left:222.72px;top:83.6px;font-size:6.2px;transform:translate(0,-0.8465em);color:#8c8c8c;">&lt;TEXT&gt;</span>
<span style="left:231.33px;top:65.2px;font-size:8.7px;transform:translate(0,-0.8465em);-webkit-text-stroke:0.22px currentColor;letter-spacing:0.1px;">R7</span>
<span style="left:231.33px;top:75.2px;font-size:5.7px;transform:translate(0,-0.8465em);font-weight:bold;">220R</span>
<span style="left:231.33px;top:83.6px;font-size:6.2px;transform:translate(0,-0.8465em);color:#8c8c8c;">&lt;TEXT&gt;</span>
<span style="left:239.93px;top:65.2px;font-size:8.7px;transform:translate(0,-0.8465em);-webkit-text-stroke:0.22px currentColor;letter-spacing:0.1px;">R6</span>
<span style="left:239.93px;top:75.2px;font-size:5.7px;transform:translate(0,-0.8465em);font-weight:bold;">220R</span>
<span style="left:239.93px;top:83.6px;font-size:6.2px;transform:translate(0,-0.8465em);color:#8c8c8c;">&lt;TEXT&gt;</span>
<span style="left:248.53px;top:65.2px;font-size:8.7px;transform:translate(0,-0.8465em);-webkit-text-stroke:0.22px currentColor;letter-spacing:0.1px;">R5</span>
<span style="left:248.53px;top:75.2px;font-size:5.7px;transform:translate(0,-0.8465em);font-weight:bold;">220R</span>
<span style="left:248.53px;top:83.6px;font-size:6.2px;transform:translate(0,-0.8465em);color:#8c8c8c;">&lt;TEXT&gt;</span>
<span style="left:257.13px;top:65.2px;font-size:8.7px;transform:translate(0,-0.8465em);-webkit-text-stroke:0.22px currentColor;letter-spacing:0.1px;">R4</span>
<span style="left:257.13px;top:75.2px;font-size:5.7px;transform:translate(0,-0.8465em);font-weight:bold;">220R</span>
<span style="left:257.13px;top:83.6px;font-size:6.2px;transform:translate(0,-0.8465em);color:#8c8c8c;">&lt;TEXT&gt;</span>
<span style="left:265.73px;top:65.2px;font-size:8.7px;transform:translate(0,-0.8465em);-webkit-text-stroke:0.22px currentColor;letter-spacing:0.1px;">R3</span>
<span style="left:265.73px;top:75.2px;font-size:5.7px;transform:translate(0,-0.8465em);font-weight:bold;">220R</span>
<span style="left:265.73px;top:83.6px;font-size:6.2px;transform:translate(0,-0.8465em);color:#8c8c8c;">&lt;TEXT&gt;</span>
<span style="left:274.33px;top:65.2px;font-size:8.7px;transform:translate(0,-0.8465em);-webkit-text-stroke:0.22px currentColor;letter-spacing:0.1px;">R2</span>
<span style="left:274.33px;top:75.2px;font-size:5.7px;transform:translate(0,-0.8465em);font-weight:bold;">220R</span>
<span style="left:274.33px;top:83.6px;font-size:6.2px;transform:translate(0,-0.8465em);color:#8c8c8c;">&lt;TEXT&gt;</span>
<span style="left:282.93px;top:65.2px;font-size:8.7px;transform:translate(0,-0.8465em);-webkit-text-stroke:0.22px currentColor;letter-spacing:0.1px;">R1</span>
<span style="left:282.93px;top:75.2px;font-size:5.7px;transform:translate(0,-0.8465em);font-weight:bold;">220R</span>
<span style="left:282.93px;top:83.6px;font-size:6.2px;transform:translate(0,-0.8465em);color:#8c8c8c;">&lt;TEXT&gt;</span>
<span style="left:59.91px;top:313.2px;font-size:6px;transform:rotate(-90deg) translate(0,-0.8465em);font-weight:bold;">P1.7</span>
<span style="left:55.81px;top:249.2px;font-size:6px;transform:rotate(-90deg) translate(0,-0.8465em);">8</span>
<span style="left:59.91px;top:232.4px;font-size:6px;transform:rotate(-90deg) translate(0,-0.8465em);">P1.7</span>
<span style="left:68.51px;top:313.2px;font-size:6px;transform:rotate(-90deg) translate(0,-0.8465em);font-weight:bold;">P1.6</span>
<span style="left:64.41px;top:249.2px;font-size:6px;transform:rotate(-90deg) translate(0,-0.8465em);">7</span>
<span style="left:68.51px;top:232.4px;font-size:6px;transform:rotate(-90deg) translate(0,-0.8465em);">P1.6</span>
<span style="left:77.11px;top:313.2px;font-size:6px;transform:rotate(-90deg) translate(0,-0.8465em);font-weight:bold;">P1.5</span>
<span style="left:73.01px;top:249.2px;font-size:6px;transform:rotate(-90deg) translate(0,-0.8465em);">6</span>
<span style="left:77.11px;top:232.4px;font-size:6px;transform:rotate(-90deg) translate(0,-0.8465em);">P1.5</span>
<span style="left:85.71px;top:313.2px;font-size:6px;transform:rotate(-90deg) translate(0,-0.8465em);font-weight:bold;">P1.4</span>
<span style="left:81.61px;top:249.2px;font-size:6px;transform:rotate(-90deg) translate(0,-0.8465em);">5</span>
<span style="left:85.71px;top:232.4px;font-size:6px;transform:rotate(-90deg) translate(0,-0.8465em);">P1.4</span>
<span style="left:94.31px;top:313.2px;font-size:6px;transform:rotate(-90deg) translate(0,-0.8465em);font-weight:bold;">P1.3</span>
<span style="left:90.21px;top:249.2px;font-size:6px;transform:rotate(-90deg) translate(0,-0.8465em);">4</span>
<span style="left:94.31px;top:232.4px;font-size:6px;transform:rotate(-90deg) translate(0,-0.8465em);">P1.3</span>
<span style="left:102.91px;top:313.2px;font-size:6px;transform:rotate(-90deg) translate(0,-0.8465em);font-weight:bold;">P1.2</span>
<span style="left:98.81px;top:249.2px;font-size:6px;transform:rotate(-90deg) translate(0,-0.8465em);">3</span>
<span style="left:102.91px;top:232.4px;font-size:6px;transform:rotate(-90deg) translate(0,-0.8465em);">P1.2</span>
<span style="left:111.51px;top:313.2px;font-size:6px;transform:rotate(-90deg) translate(0,-0.8465em);font-weight:bold;">P1.1</span>
<span style="left:107.41px;top:249.2px;font-size:6px;transform:rotate(-90deg) translate(0,-0.8465em);">2</span>
<span style="left:111.51px;top:232.4px;font-size:6px;transform:rotate(-90deg) translate(0,-0.8465em);">P1.1/T2EX</span>
<span style="left:120.11px;top:313.2px;font-size:6px;transform:rotate(-90deg) translate(0,-0.8465em);font-weight:bold;">P1.0</span>
<span style="left:116.01px;top:249.2px;font-size:6px;transform:rotate(-90deg) translate(0,-0.8465em);">1</span>
<span style="left:120.11px;top:232.4px;font-size:6px;transform:rotate(-90deg) translate(0,-0.8465em);">P1.0/T2</span>
<span style="left:154.52px;top:232.6px;font-size:6px;transform:rotate(-90deg) translate(0,-0.8465em);">EA</span>
<span style="left:150.42px;top:253px;font-size:6px;transform:rotate(-90deg) translate(0,-0.8465em);">31</span>
<span style="left:163.12px;top:232.6px;font-size:6px;transform:rotate(-90deg) translate(0,-0.8465em);">ALE</span>
<span style="left:159.02px;top:253px;font-size:6px;transform:rotate(-90deg) translate(0,-0.8465em);">30</span>
<span style="left:171.72px;top:232.6px;font-size:6px;transform:rotate(-90deg) translate(0,-0.8465em);">PSEN</span>
<span style="left:167.62px;top:253px;font-size:6px;transform:rotate(-90deg) translate(0,-0.8465em);">29</span>
<span style="left:214.72px;top:232.6px;font-size:6px;transform:rotate(-90deg) translate(0,-0.8465em);">RST</span>
<span style="left:210.62px;top:253px;font-size:6px;transform:rotate(-90deg) translate(0,-0.8465em);">9</span>
<span style="left:249.13px;top:232.6px;font-size:6px;transform:rotate(-90deg) translate(0,-0.8465em);">XTAL2</span>
<span style="left:245.03px;top:253px;font-size:6px;transform:rotate(-90deg) translate(0,-0.8465em);">18</span>
<span style="left:274.93px;top:232.6px;font-size:6px;transform:rotate(-90deg) translate(0,-0.8465em);">XTAL1</span>
<span style="left:270.83px;top:253px;font-size:6px;transform:rotate(-90deg) translate(0,-0.8465em);">19</span>
<span style="left:287.6px;top:124.9px;font-size:8.7px;transform:translate(0,-0.8465em);-webkit-text-stroke:0.22px currentColor;letter-spacing:0.1px;">U1</span>
<span style="left:287.4px;top:134.9px;font-size:6.3px;transform:translate(0,-0.8465em);">AT89C52</span>
<span style="left:287.4px;top:144.2px;font-size:6.3px;transform:translate(0,-0.8465em);letter-spacing:0.42px;">SRCFILE=ÕÇÄÜ¨ª Á± ª Ï·Ðõ\and.hex</span>
<span style="left:315.8px;top:258.8px;font-size:8.7px;transform:translate(0,-0.8465em);-webkit-text-stroke:0.22px currentColor;letter-spacing:0.1px;">U4</span>
<span style="left:315.6px;top:381.4px;font-size:6.2px;transform:translate(0,-0.8465em);font-weight:bold;">ADC0804</span>
<span style="left:315.4px;top:388.9px;font-size:6.2px;transform:translate(0,-0.8465em);color:#8c8c8c;">&lt;TEXT&gt;</span>
<span style="left:320.2px;top:273.91px;font-size:6px;transform:translate(0,-0.8465em);">CS</span>
<span style="left:306.4px;top:269.71px;font-size:6px;transform:translate(-50%,-0.8465em);">1</span>
<span style="left:320.2px;top:282.51px;font-size:6px;transform:translate(0,-0.8465em);">RD</span>
<span style="left:306.4px;top:278.31px;font-size:6px;transform:translate(-50%,-0.8465em);">2</span>
<span style="left:320.2px;top:291.12px;font-size:6px;transform:translate(0,-0.8465em);">WR</span>
<span style="left:306.4px;top:286.92px;font-size:6px;transform:translate(-50%,-0.8465em);">3</span>
<span style="left:320.2px;top:299.72px;font-size:6px;transform:translate(0,-0.8465em);">CLK IN</span>
<span style="left:306.4px;top:295.52px;font-size:6px;transform:translate(-50%,-0.8465em);">4</span>
<span style="left:320.2px;top:307.52px;font-size:6px;transform:translate(0,-0.8465em);font-weight:bold;">INTR</span>
<span style="left:306.4px;top:303.32px;font-size:6px;transform:translate(-50%,-0.8465em);">5</span>
<span style="left:320.2px;top:316.13px;font-size:6px;transform:translate(0,-0.8465em);">AGND</span>
<span style="left:306.4px;top:311.93px;font-size:6px;transform:translate(-50%,-0.8465em);">8</span>
<span style="left:320.2px;top:324.73px;font-size:6px;transform:translate(0,-0.8465em);">DGND</span>
<span style="left:306.4px;top:320.53px;font-size:6px;transform:translate(-50%,-0.8465em);">10</span>
<span style="left:320.2px;top:333.34px;font-size:6px;transform:translate(0,-0.8465em);">VREF/2</span>
<span style="left:306.4px;top:329.14px;font-size:6px;transform:translate(-50%,-0.8465em);">9</span>
<span style="left:320.2px;top:341.94px;font-size:6px;transform:translate(0,-0.8465em);">CLK R</span>
<span style="left:306.4px;top:337.74px;font-size:6px;transform:translate(-50%,-0.8465em);">19</span>
<span style="left:320.2px;top:359.15px;font-size:6px;transform:translate(0,-0.8465em);">VIN+</span>
<span style="left:306.4px;top:354.95px;font-size:6px;transform:translate(-50%,-0.8465em);">6</span>
<span style="left:320.2px;top:367.75px;font-size:6px;transform:translate(0,-0.8465em);">VIN-</span>
<span style="left:306.4px;top:363.55px;font-size:6px;transform:translate(-50%,-0.8465em);">7</span>
<span style="left:269.6px;top:273.91px;font-size:6px;transform:translate(-100%,-0.8465em);font-weight:bold;">P3.0</span>
<span style="left:269.6px;top:282.51px;font-size:6px;transform:translate(-100%,-0.8465em);font-weight:bold;">P3.1</span>
<span style="left:269.6px;top:291.12px;font-size:6px;transform:translate(-100%,-0.8465em);font-weight:bold;">P3.2</span>
<span style="left:269.6px;top:299.72px;font-size:6px;transform:translate(-100%,-0.8465em);font-weight:bold;">CLKIN</span>
<span style="left:269.6px;top:341.94px;font-size:6px;transform:translate(-100%,-0.8465em);font-weight:bold;">CLKR</span>
<span style="left:269.6px;top:359.15px;font-size:6px;transform:translate(-100%,-0.8465em);font-weight:bold;">6</span>
<span style="left:415.4px;top:273.91px;font-size:6px;transform:translate(-100%,-0.8465em);">VCC</span>
<span style="left:432px;top:269.71px;font-size:6px;transform:translate(-50%,-0.8465em);">20</span>
<span style="left:415.4px;top:282.51px;font-size:6px;transform:translate(-100%,-0.8465em);">DB0(LSB)</span>
<span style="left:432px;top:278.31px;font-size:6px;transform:translate(-50%,-0.8465em);">18</span>
<span style="left:467px;top:282.51px;font-size:6px;transform:translate(0,-0.8465em);font-weight:bold;">P1.0</span>
<span style="left:415.4px;top:291.12px;font-size:6px;transform:translate(-100%,-0.8465em);">DB1</span>
<span style="left:432px;top:286.92px;font-size:6px;transform:translate(-50%,-0.8465em);">17</span>
<span style="left:467px;top:291.12px;font-size:6px;transform:translate(0,-0.8465em);font-weight:bold;">P1.1</span>
<span style="left:415.4px;top:299.72px;font-size:6px;transform:translate(-100%,-0.8465em);">DB2</span>
<span style="left:432px;top:295.52px;font-size:6px;transform:translate(-50%,-0.8465em);">16</span>
<span style="left:467px;top:299.72px;font-size:6px;transform:translate(0,-0.8465em);font-weight:bold;">P1.2</span>
<span style="left:415.4px;top:307.52px;font-size:6px;transform:translate(-100%,-0.8465em);">DB3</span>
<span style="left:432px;top:303.32px;font-size:6px;transform:translate(-50%,-0.8465em);">15</span>
<span style="left:467px;top:307.52px;font-size:6px;transform:translate(0,-0.8465em);font-weight:bold;">P1.3</span>
<span style="left:415.4px;top:316.13px;font-size:6px;transform:translate(-100%,-0.8465em);">DB4</span>
<span style="left:432px;top:311.93px;font-size:6px;transform:translate(-50%,-0.8465em);">14</span>
<span style="left:467px;top:316.13px;font-size:6px;transform:translate(0,-0.8465em);font-weight:bold;">P1.4</span>
<span style="left:415.4px;top:324.73px;font-size:6px;transform:translate(-100%,-0.8465em);">DB5</span>
<span style="left:432px;top:320.53px;font-size:6px;transform:translate(-50%,-0.8465em);">13</span>
<span style="left:467px;top:324.73px;font-size:6px;transform:translate(0,-0.8465em);font-weight:bold;">P1.5</span>
<span style="left:415.4px;top:333.34px;font-size:6px;transform:translate(-100%,-0.8465em);">DB6</span>
<span style="left:432px;top:329.14px;font-size:6px;transform:translate(-50%,-0.8465em);">12</span>
<span style="left:467px;top:333.34px;font-size:6px;transform:translate(0,-0.8465em);font-weight:bold;">P1.6</span>
<span style="left:415.4px;top:341.94px;font-size:6px;transform:translate(-100%,-0.8465em);">DB7(MSB)</span>
<span style="left:432px;top:337.74px;font-size:6px;transform:translate(-50%,-0.8465em);">11</span>
<span style="left:467px;top:341.94px;font-size:6px;transform:translate(0,-0.8465em);font-weight:bold;">P1.7</span>
<span style="left:239.93px;top:305.42px;font-size:8.7px;transform:translate(0,-0.8465em);-webkit-text-stroke:0.22px currentColor;letter-spacing:0.1px;">R11</span>
<span style="left:239.93px;top:315.02px;font-size:6px;transform:translate(0,-0.8465em);font-weight:bold;">4.7K</span>
<span style="left:239.23px;top:323.62px;font-size:6.2px;transform:translate(0,-0.8465em);color:#8c8c8c;">&lt;TEXT&gt;</span>
<span style="left:239.93px;top:364.84px;font-size:8.7px;transform:translate(0,-0.8465em);-webkit-text-stroke:0.22px currentColor;letter-spacing:0.1px;">R10</span>
<span style="left:239.93px;top:374.44px;font-size:6px;transform:translate(0,-0.8465em);font-weight:bold;">4.7K</span>
<span style="left:239.23px;top:383.04px;font-size:6.2px;transform:translate(0,-0.8465em);color:#8c8c8c;">&lt;TEXT&gt;</span>
<span style="left:328.9px;top:213px;font-size:6px;transform:translate(-100%,-0.8465em);font-weight:bold;">CLKR</span>
<span style="left:367.6px;top:204.2px;font-size:8.7px;transform:translate(0,-0.8465em);-webkit-text-stroke:0.22px currentColor;letter-spacing:0.1px;">R15</span>
<span style="left:367.8px;top:222.4px;font-size:6px;transform:translate(0,-0.8465em);font-weight:bold;">10K</span>
<span style="left:367.2px;top:230.2px;font-size:6.2px;transform:translate(0,-0.8465em);color:#8c8c8c;">&lt;TEXT&gt;</span>
<span style="left:421.15px;top:259px;font-size:5.4px;transform:rotate(-90deg) translate(0,-0.8465em);font-weight:bold;">CLKIN</span>
<span style="left:436.4px;top:199.2px;font-size:8.7px;transform:translate(0,-0.8465em);-webkit-text-stroke:0.22px currentColor;letter-spacing:0.1px;">C1</span>
<span style="left:436px;top:226.9px;font-size:6px;transform:translate(0,-0.8465em);font-weight:bold;">0.1uf</span>
<span style="left:435.6px;top:234.6px;font-size:6.2px;transform:translate(0,-0.8465em);color:#8c8c8c;">&lt;TEXT&gt;</span>
<span style="left:136.92px;top:343.6px;font-size:4.6px;transform:rotate(-90deg) translate(0,-0.8465em);color:#d02020;-webkit-text-stroke:0.2px #d02020">50%</span>
<span style="left:183.2px;top:341.94px;font-size:6px;transform:translate(0,-0.8465em);font-weight:bold;">6</span>
<span style="left:145.6px;top:327.2px;font-size:8.7px;transform:translate(0,-0.8465em);-webkit-text-stroke:0.22px currentColor;letter-spacing:0.1px;">RV1</span>
<span style="left:144.8px;top:354.9px;font-size:6.2px;transform:translate(0,-0.8465em);color:#8c8c8c;">&lt;TEXT&gt;</span>
<span style="left:145.6px;top:371.9px;font-size:6px;transform:translate(0,-0.8465em);font-weight:bold;">1k</span>
<span style="left:257.6px;top:456.4px;font-size:8.7px;transform:translate(0,-0.8465em);-webkit-text-stroke:0.22px currentColor;letter-spacing:0.1px;">U3</span>
<span style="left:257.6px;top:569.8px;font-size:6px;transform:translate(0,-0.8465em);font-weight:bold;">L298</span>
<span style="left:256.6px;top:578.2px;font-size:6.2px;transform:translate(0,-0.8465em);color:#8c8c8c;">&lt;TEXT&gt;</span>
<span style="left:158.2px;top:479.6px;font-size:6px;transform:translate(0,-0.8465em);font-weight:bold;">IN1</span>
<span style="left:143.6px;top:475.4px;font-size:6px;transform:translate(-50%,-0.8465em);">5</span>
<span style="left:158.2px;top:488.21px;font-size:6px;transform:translate(0,-0.8465em);font-weight:bold;">IN2</span>
<span style="left:143.6px;top:484.01px;font-size:6px;transform:translate(-50%,-0.8465em);">7</span>
<span style="left:158.2px;top:496.81px;font-size:6px;transform:translate(0,-0.8465em);font-weight:bold;">IN3</span>
<span style="left:143.6px;top:492.61px;font-size:6px;transform:translate(-50%,-0.8465em);">10</span>
<span style="left:158.2px;top:505.42px;font-size:6px;transform:translate(0,-0.8465em);font-weight:bold;">IN4</span>
<span style="left:143.6px;top:501.22px;font-size:6px;transform:translate(-50%,-0.8465em);">12</span>
<span style="left:158.2px;top:514.02px;font-size:6px;transform:translate(0,-0.8465em);">ENA</span>
<span style="left:143.6px;top:509.82px;font-size:6px;transform:translate(-50%,-0.8465em);">6</span>
<span style="left:158.2px;top:522.62px;font-size:6px;transform:translate(0,-0.8465em);">ENB</span>
<span style="left:143.6px;top:518.42px;font-size:6px;transform:translate(-50%,-0.8465em);">11</span>
<span style="left:158.2px;top:539.83px;font-size:6px;transform:translate(0,-0.8465em);">SENSA</span>
<span style="left:143.6px;top:535.63px;font-size:6px;transform:translate(-50%,-0.8465em);">1</span>
<span style="left:158.2px;top:548.44px;font-size:6px;transform:translate(0,-0.8465em);">SENSB</span>
<span style="left:143.6px;top:544.24px;font-size:6px;transform:translate(-50%,-0.8465em);">15</span>
<span style="left:71.6px;top:479.6px;font-size:6px;transform:translate(-100%,-0.8465em);font-weight:bold;">P2.6</span>
<span style="left:71.6px;top:488.21px;font-size:6px;transform:translate(-100%,-0.8465em);font-weight:bold;">P2.7</span>
<span style="left:110.91px;top:442.4px;font-size:8.7px;transform:translate(0,-0.8465em);-webkit-text-stroke:0.22px currentColor;letter-spacing:0.1px;">R12</span>
<span style="left:113px;top:452.4px;font-size:6px;transform:translate(0,-0.8465em);font-weight:bold;">100K</span>
<span style="left:110.21px;top:461px;font-size:6.2px;transform:translate(0,-0.8465em);color:#8c8c8c;">&lt;TEXT&gt;</span>
<span style="left:119.51px;top:442.4px;font-size:8.7px;transform:translate(0,-0.8465em);-webkit-text-stroke:0.22px currentColor;letter-spacing:0.1px;">R13</span>
<span style="left:115.8px;top:452.4px;font-size:6px;transform:translate(0,-0.8465em);font-weight:bold;">100K</span>
<span style="left:118.81px;top:461px;font-size:6.2px;transform:translate(0,-0.8465em);color:#8c8c8c;">&lt;TEXT&gt;</span>
<span style="left:186.62px;top:478.8px;font-size:6px;transform:translate(-50%,-0.8465em);">VCC</span>
<span style="left:189.02px;top:459.4px;font-size:6px;transform:translate(0,-0.8465em);">9</span>
<span style="left:221.03px;top:478.8px;font-size:6px;transform:translate(-50%,-0.8465em);">VS</span>
<span style="left:223.43px;top:459.4px;font-size:6px;transform:translate(0,-0.8465em);">4</span>
<span style="left:203.82px;top:548.2px;font-size:6px;transform:translate(-50%,-0.8465em);">GND</span>
<span style="left:206.22px;top:569.6px;font-size:6px;transform:translate(0,-0.8465em);">8</span>
<span style="left:252.2px;top:488.21px;font-size:6px;transform:translate(-100%,-0.8465em);">OUT1</span>
<span style="left:266px;top:483.91px;font-size:6px;transform:translate(-50%,-0.8465em);">2</span>
<span style="left:252.2px;top:505.42px;font-size:6px;transform:translate(-100%,-0.8465em);">OUT2</span>
<span style="left:266px;top:501.12px;font-size:6px;transform:translate(-50%,-0.8465em);">3</span>
<span style="left:252.2px;top:522.62px;font-size:6px;transform:translate(-100%,-0.8465em);">OUT3</span>
<span style="left:266px;top:518.32px;font-size:6px;transform:translate(-50%,-0.8465em);">13</span>
<span style="left:252.2px;top:539.83px;font-size:6px;transform:translate(-100%,-0.8465em);">OUT4</span>
<span style="left:266px;top:535.53px;font-size:6px;transform:translate(-50%,-0.8465em);">14</span>
<span style="left:325px;top:528.4px;font-size:6.4px;transform:translate(-50%,-0.8465em);color:#38a838;">+88.8</span>
<span style="left:496.26px;top:126.6px;font-size:8px;transform:translate(0,-0.8465em);color:#2a2a2a;letter-spacing:1.5px;-webkit-text-stroke:0.22px currentColor;-webkit-text-stroke:0">ABCDEFG</span>
<span style="left:551.06px;top:126.6px;font-size:8px;transform:translate(0,-0.8465em);color:#2a2a2a;letter-spacing:1.4px;-webkit-text-stroke:0.22px currentColor;-webkit-text-stroke:0">DP</span>
<span style="left:587.86px;top:126.6px;font-size:8px;transform:translate(0,-0.8465em);color:#2a2a2a;letter-spacing:1.4px;-webkit-text-stroke:0.22px currentColor;-webkit-text-stroke:0">12</span>
<span style="left:498.26px;top:171.4px;font-size:6.4px;transform:rotate(-90deg) translate(0,-0.8465em);">a</span>
<span style="left:506.86px;top:171.4px;font-size:6.4px;transform:rotate(-90deg) translate(0,-0.8465em);">b</span>
<span style="left:515.46px;top:171.4px;font-size:6.4px;transform:rotate(-90deg) translate(0,-0.8465em);">c</span>
<span style="left:524.06px;top:171.4px;font-size:6.4px;transform:rotate(-90deg) translate(0,-0.8465em);">d</span>
<span style="left:532.66px;top:171.4px;font-size:6.4px;transform:rotate(-90deg) translate(0,-0.8465em);">e</span>
<span style="left:541.26px;top:171.4px;font-size:6.4px;transform:rotate(-90deg) translate(0,-0.8465em);">f</span>
<span style="left:549.86px;top:171.4px;font-size:6.4px;transform:rotate(-90deg) translate(0,-0.8465em);">g</span>
<span style="left:558.46px;top:171.4px;font-size:6.4px;transform:rotate(-90deg) translate(0,-0.8465em);">h</span>
<span style="left:593.26px;top:174.8px;font-size:6.2px;transform:rotate(-90deg) translate(0,-0.8465em);font-weight:bold;">22</span>
<span style="left:601.86px;top:174.8px;font-size:6.2px;transform:rotate(-90deg) translate(0,-0.8465em);font-weight:bold;">23</span>
<span style="left:625.27px;top:126.6px;font-size:8px;transform:translate(0,-0.8465em);color:#2a2a2a;letter-spacing:1.5px;-webkit-text-stroke:0.22px currentColor;-webkit-text-stroke:0">ABCDEFG</span>
<span style="left:680.07px;top:126.6px;font-size:8px;transform:translate(0,-0.8465em);color:#2a2a2a;letter-spacing:1.4px;-webkit-text-stroke:0.22px currentColor;-webkit-text-stroke:0">DP</span>
<span style="left:716.87px;top:126.6px;font-size:8px;transform:translate(0,-0.8465em);color:#2a2a2a;letter-spacing:1.4px;-webkit-text-stroke:0.22px currentColor;-webkit-text-stroke:0">12</span>
<span style="left:627.27px;top:171.4px;font-size:6.4px;transform:rotate(-90deg) translate(0,-0.8465em);">a</span>
<span style="left:635.87px;top:171.4px;font-size:6.4px;transform:rotate(-90deg) translate(0,-0.8465em);">b</span>
<span style="left:644.47px;top:171.4px;font-size:6.4px;transform:rotate(-90deg) translate(0,-0.8465em);">c</span>
<span style="left:653.07px;top:171.4px;font-size:6.4px;transform:rotate(-90deg) translate(0,-0.8465em);">d</span>
<span style="left:661.67px;top:171.4px;font-size:6.4px;transform:rotate(-90deg) translate(0,-0.8465em);">e</span>
<span style="left:670.27px;top:171.4px;font-size:6.4px;transform:rotate(-90deg) translate(0,-0.8465em);">f</span>
<span style="left:678.87px;top:171.4px;font-size:6.4px;transform:rotate(-90deg) translate(0,-0.8465em);">g</span>
<span style="left:687.47px;top:171.4px;font-size:6.4px;transform:rotate(-90deg) translate(0,-0.8465em);">h</span>
<span style="left:722.27px;top:174.8px;font-size:6.2px;transform:rotate(-90deg) translate(0,-0.8465em);font-weight:bold;">24</span>
<span style="left:730.87px;top:174.8px;font-size:6.2px;transform:rotate(-90deg) translate(0,-0.8465em);font-weight:bold;">25</span>
<span style="left:509.07px;top:265.3px;font-size:6px;transform:translate(-100%,-0.8465em);font-weight:bold;">P2.2</span>
<span style="left:663.47px;top:265.3px;font-size:6px;transform:translate(0,-0.8465em);font-weight:bold;">22</span>
<span style="left:564.87px;top:241.7px;font-size:8.7px;transform:translate(0,-0.8465em);-webkit-text-stroke:0.22px currentColor;letter-spacing:0.1px;">U2</span>
<span style="left:564.87px;top:287px;font-size:6px;transform:translate(0,-0.8465em);font-weight:bold;letter-spacing:0.5px;">NOR</span>
<span style="left:563.87px;top:296.3px;font-size:6.2px;transform:translate(0,-0.8465em);color:#8c8c8c;">&lt;TEXT&gt;</span>
<span style="left:689.69px;top:265.3px;font-size:6px;transform:translate(-100%,-0.8465em);font-weight:bold;">P2.3</span>
<span style="left:844.09px;top:265.3px;font-size:6px;transform:translate(0,-0.8465em);font-weight:bold;">23</span>
<span style="left:745.49px;top:241.7px;font-size:8.7px;transform:translate(0,-0.8465em);-webkit-text-stroke:0.22px currentColor;letter-spacing:0.1px;">U6</span>
<span style="left:745.49px;top:287px;font-size:6px;transform:translate(0,-0.8465em);font-weight:bold;letter-spacing:0.5px;">NOR</span>
<span style="left:744.49px;top:296.3px;font-size:6.2px;transform:translate(0,-0.8465em);color:#8c8c8c;">&lt;TEXT&gt;</span>
<span style="left:509.07px;top:359.4px;font-size:6px;transform:translate(-100%,-0.8465em);font-weight:bold;">P2.4</span>
<span style="left:663.47px;top:359.4px;font-size:6px;transform:translate(0,-0.8465em);font-weight:bold;">24</span>
<span style="left:564.87px;top:335.8px;font-size:8.7px;transform:translate(0,-0.8465em);-webkit-text-stroke:0.22px currentColor;letter-spacing:0.1px;">U5</span>
<span style="left:564.87px;top:381.1px;font-size:6px;transform:translate(0,-0.8465em);font-weight:bold;letter-spacing:0.5px;">NOR</span>
<span style="left:563.87px;top:390.4px;font-size:6.2px;transform:translate(0,-0.8465em);color:#8c8c8c;">&lt;TEXT&gt;</span>
<span style="left:689.69px;top:359.4px;font-size:6px;transform:translate(-100%,-0.8465em);font-weight:bold;">P2.5</span>
<span style="left:844.09px;top:359.4px;font-size:6px;transform:translate(0,-0.8465em);font-weight:bold;">25</span>
<span style="left:745.49px;top:335.8px;font-size:8.7px;transform:translate(0,-0.8465em);-webkit-text-stroke:0.22px currentColor;letter-spacing:0.1px;">U7</span>
<span style="left:745.49px;top:381.1px;font-size:6px;transform:translate(0,-0.8465em);font-weight:bold;letter-spacing:0.5px;">NOR</span>
<span style="left:744.49px;top:390.4px;font-size:6.2px;transform:translate(0,-0.8465em);color:#8c8c8c;">&lt;TEXT&gt;</span>
<span style="left:800.69px;top:57.2px;font-size:6.2px;transform:translate(0,-0.8465em);color:#8c8c8c;">&lt;TEXT&gt;</span>
<span style="left:800.89px;top:24.7px;font-size:8.7px;transform:translate(0,-0.8465em);letter-spacing:0.6px;-webkit-text-stroke:0.22px currentColor;">UP</span>
<span style="left:766.8px;top:41.2px;font-size:6px;transform:translate(-100%,-0.8465em);font-weight:bold;">P2.1</span>
<span style="left:800.69px;top:177.9px;font-size:6.2px;transform:translate(0,-0.8465em);color:#8c8c8c;">&lt;TEXT&gt;</span>
<span style="left:800.89px;top:145.4px;font-size:8.7px;transform:translate(0,-0.8465em);letter-spacing:0.6px;-webkit-text-stroke:0.22px currentColor;">DOWN</span>
<span style="left:766.8px;top:161.9px;font-size:6px;transform:translate(-100%,-0.8465em);font-weight:bold;">P2.0</span>
<span style="left:413.65px;top:504.21px;font-size:6.2px;transform:translate(0,-0.8465em);color:#8c8c8c;">&lt;TEXT&gt;</span>
<span style="left:414.05px;top:470.4px;font-size:8.7px;transform:translate(0,-0.8465em);-webkit-text-stroke:0.22px currentColor;letter-spacing:0.1px;">1</span>
<span style="left:403.95px;top:455px;font-size:6px;transform:rotate(-90deg) translate(0,-0.8465em);font-weight:bold;">P3.3</span>
<span style="left:499.66px;top:504.21px;font-size:6.2px;transform:translate(0,-0.8465em);color:#8c8c8c;">&lt;TEXT&gt;</span>
<span style="left:500.06px;top:470.4px;font-size:8.7px;transform:translate(0,-0.8465em);-webkit-text-stroke:0.22px currentColor;letter-spacing:0.1px;">2</span>
<span style="left:481.36px;top:455px;font-size:6px;transform:rotate(-90deg) translate(0,-0.8465em);font-weight:bold;">P3.4</span>
<span style="left:581.37px;top:504.21px;font-size:6.2px;transform:translate(0,-0.8465em);color:#8c8c8c;">&lt;TEXT&gt;</span>
<span style="left:581.77px;top:470.4px;font-size:8.7px;transform:translate(0,-0.8465em);-webkit-text-stroke:0.22px currentColor;letter-spacing:0.1px;">3</span>
<span style="left:571.67px;top:455px;font-size:6px;transform:rotate(-90deg) translate(0,-0.8465em);font-weight:bold;">P3.5</span>
<span style="left:658.78px;top:504.21px;font-size:6.2px;transform:translate(0,-0.8465em);color:#8c8c8c;">&lt;TEXT&gt;</span>
<span style="left:659.18px;top:470.4px;font-size:8.7px;transform:translate(0,-0.8465em);-webkit-text-stroke:0.22px currentColor;letter-spacing:0.1px;">4</span>
<span style="left:649.07px;top:455px;font-size:6px;transform:rotate(-90deg) translate(0,-0.8465em);font-weight:bold;">P3.6</span>
<span style="left:736.19px;top:504.21px;font-size:6.2px;transform:translate(0,-0.8465em);color:#8c8c8c;">&lt;TEXT&gt;</span>
<span style="left:736.59px;top:470.4px;font-size:8.7px;transform:translate(0,-0.8465em);-webkit-text-stroke:0.22px currentColor;letter-spacing:0.1px;">5</span>
<span style="left:726.48px;top:455px;font-size:6px;transform:rotate(-90deg) translate(0,-0.8465em);font-weight:bold;">P3.7</span>
</div>
<svg width="874" height="602" viewBox="0 0 874 602">
<rect x="243.53" y="57.2" width="6.6" height="24.6" fill="#c8c8a9" stroke="#aa5450" stroke-width="1.7"/>
<path d="M434 293.62L439.2 297.02L434 300.42" fill="none" stroke="#3434e0" stroke-width="2.1" stroke-linejoin="miter"/>
<path d="M432.8 297.02H437.9" stroke="#5a3a8a" stroke-width="1.6"/>
<rect x="106.21" y="434.28" width="6" height="25.82" fill="#c8c8a9" stroke="#aa5450" stroke-width="1.7"/>
</svg>
</body></html>
